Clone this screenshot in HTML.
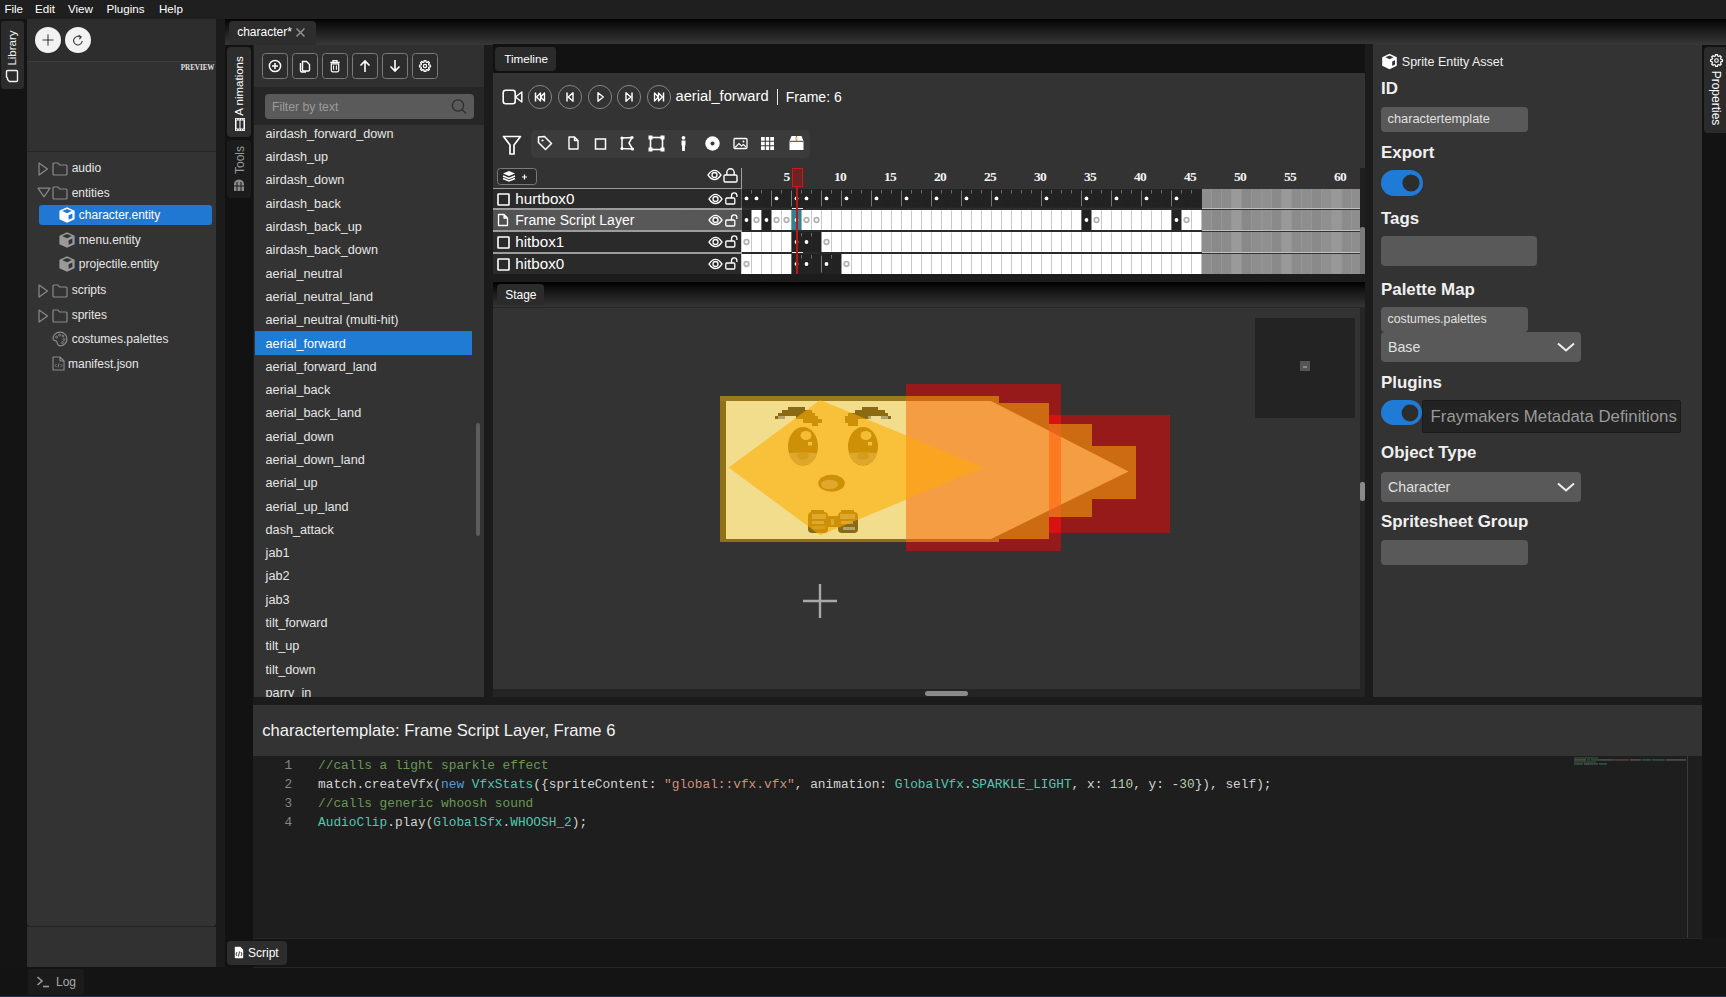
<!DOCTYPE html>
<html><head><meta charset="utf-8">
<style>
*{margin:0;padding:0;box-sizing:border-box}
html,body{width:1726px;height:997px;overflow:hidden;background:#131313;font-family:"Liberation Sans",sans-serif;color:#e8e8e8}
.a{position:absolute}
.t{position:absolute;white-space:nowrap;line-height:1}
svg{position:absolute;overflow:visible}
</style></head><body>
<div class="a" style="left:0px;top:0px;width:1726px;height:19px;background:#1f1f1f;"></div><div class="t" style="left:4.4px;top:2.68px;font-size:11.6px;color:#fff;font-family:'Liberation Sans',sans-serif;">File</div><div class="t" style="left:35px;top:2.68px;font-size:11.6px;color:#fff;font-family:'Liberation Sans',sans-serif;">Edit</div><div class="t" style="left:68px;top:2.68px;font-size:11.6px;color:#fff;font-family:'Liberation Sans',sans-serif;">View</div><div class="t" style="left:106.5px;top:2.68px;font-size:11.6px;color:#fff;font-family:'Liberation Sans',sans-serif;">Plugins</div><div class="t" style="left:159px;top:2.68px;font-size:11.6px;color:#fff;font-family:'Liberation Sans',sans-serif;">Help</div><div class="a" style="left:0px;top:19px;width:26px;height:948px;background:#141414;"></div><div class="a" style="left:1px;top:21px;width:23px;height:68px;background:#2b2b2b;border-radius:3px"></div><div class="t" style="left:12.5px;top:47.5px;font-size:11.5px;color:#f0f0f0;transform:translate(-50%,-50%) rotate(-90deg);transform-origin:center">Library</div><svg style="left:5px;top:69px" width="14" height="14" viewBox="0 0 14 14"><path d="M2.5 1.5 H11.5 a1 1 0 0 1 1 1 V11.5 a1 1 0 0 1 -1 1 H4.5 L2.5 10.5 V9 L1.5 8 V2.5 a1 1 0 0 1 1 -1z" fill="none" stroke="#f0f0f0" stroke-width="1.4" stroke-linejoin="round"/></svg><div class="a" style="left:27px;top:19px;width:189px;height:42px;background:#2d2d2d;"></div><div class="a" style="left:27px;top:61px;width:189px;height:1px;background:#3d3d3d;"></div><div class="a" style="left:27px;top:62px;width:189px;height:89px;background:#313131;"></div><div class="a" style="left:27px;top:151px;width:189px;height:1px;background:#262626;"></div><div class="a" style="left:27px;top:152px;width:189px;height:774px;background:#333333;border-radius:0 0 3px 3px"></div><div class="a" style="left:27px;top:926px;width:189px;height:1px;background:#222;"></div><div class="a" style="left:27px;top:927px;width:189px;height:40px;background:#313131;"></div><div class="a" style="left:216px;top:19px;width:9px;height:948px;background:#1b1b1b;"></div><svg style="left:35px;top:27px" width="26" height="26" viewBox="0 0 26 26"><circle cx="13" cy="13" r="13" fill="#f2f2f2"/><path d="M13 7.5v11M7.5 13h11" stroke="#3a3a3a" stroke-width="1.1"/></svg><svg style="left:65px;top:27px" width="26" height="26" viewBox="0 0 26 26"><circle cx="13" cy="13" r="13" fill="#f2f2f2"/><path d="M15.5 10.2 A4.3 4.3 0 1 0 17.2 14" fill="none" stroke="#3a3a3a" stroke-width="1.1"/><path d="M13.6 8.3 l2.6 1.6 -1.8 2.3" fill="none" stroke="#3a3a3a" stroke-width="1.1"/></svg><div class="t" style="left:180.8px;top:64.97px;font-size:7.2px;color:#e0e0e0;font-family:'Liberation Serif',serif;font-weight:bold;letter-spacing:-0.1px">PREVIEW</div><div class="a" style="left:39px;top:205px;width:173px;height:20px;background:#2178d2;border-radius:3px"></div><svg style="left:37.5px;top:161.9px" width="11" height="14" viewBox="0 0 11 14"><path d="M1 1 L9.5 7 L1 13 Z" fill="none" stroke="#8a8a8a" stroke-width="1.2" stroke-linejoin="round"/></svg><svg style="left:52px;top:161.9px" width="16" height="14" viewBox="0 0 16 14"><path d="M1 12 V2 a1 1 0 0 1 1 -1 h4 l1.5 2 h6.5 a1 1 0 0 1 1 1 v8 a1 1 0 0 1 -1 1 h-12 a1 1 0 0 1 -1 -1z" fill="none" stroke="#8a8a8a" stroke-width="1.2" stroke-linejoin="round"/></svg><div class="t" style="left:71.7px;top:162.44px;font-size:12px;color:#e6e6e6;font-family:'Liberation Sans',sans-serif;">audio</div><svg style="left:37px;top:187.3px" width="14" height="11" viewBox="0 0 14 11"><path d="M1 1.2 L13 1.2 L7 9.8 Z" fill="none" stroke="#8a8a8a" stroke-width="1.2" stroke-linejoin="round"/></svg><svg style="left:52px;top:186.3px" width="16" height="14" viewBox="0 0 16 14"><path d="M1 12 V2 a1 1 0 0 1 1 -1 h4 l1.5 2 h6.5 a1 1 0 0 1 1 1 v8 a1 1 0 0 1 -1 1 h-12 a1 1 0 0 1 -1 -1z" fill="none" stroke="#8a8a8a" stroke-width="1.2" stroke-linejoin="round"/></svg><div class="t" style="left:71.7px;top:186.84px;font-size:12px;color:#e6e6e6;font-family:'Liberation Sans',sans-serif;">entities</div><svg style="left:59px;top:207.4px" width="16" height="16" viewBox="0 0 16 16"><path d="M8 0.3 L15.6 3.8 V12.2 L8 15.7 L0.4 12.2 V3.8 Z" fill="#ffffff"/><path d="M3.2 4.1 L8 2 L12.8 4.1 L8 6.3 Z" fill="#2178d2"/><path d="M9.6 8.2 L13.4 6.4 V11 L9.6 12.8 Z" fill="#2178d2"/></svg><div class="t" style="left:78.8px;top:208.94px;font-size:12px;color:#ffffff;font-family:'Liberation Sans',sans-serif;">character.entity</div><svg style="left:59px;top:232.2px" width="16" height="16" viewBox="0 0 16 16"><path d="M8 0.3 L15.6 3.8 V12.2 L8 15.7 L0.4 12.2 V3.8 Z" fill="#9a9a9a"/><path d="M3.2 4.1 L8 2 L12.8 4.1 L8 6.3 Z" fill="#333"/><path d="M9.6 8.2 L13.4 6.4 V11 L9.6 12.8 Z" fill="#333"/></svg><div class="t" style="left:78.8px;top:233.74px;font-size:12px;color:#e6e6e6;font-family:'Liberation Sans',sans-serif;">menu.entity</div><svg style="left:59px;top:256.3px" width="16" height="16" viewBox="0 0 16 16"><path d="M8 0.3 L15.6 3.8 V12.2 L8 15.7 L0.4 12.2 V3.8 Z" fill="#9a9a9a"/><path d="M3.2 4.1 L8 2 L12.8 4.1 L8 6.3 Z" fill="#333"/><path d="M9.6 8.2 L13.4 6.4 V11 L9.6 12.8 Z" fill="#333"/></svg><div class="t" style="left:78.8px;top:257.84px;font-size:12px;color:#e6e6e6;font-family:'Liberation Sans',sans-serif;">projectile.entity</div><svg style="left:37.5px;top:283.6px" width="11" height="14" viewBox="0 0 11 14"><path d="M1 1 L9.5 7 L1 13 Z" fill="none" stroke="#8a8a8a" stroke-width="1.2" stroke-linejoin="round"/></svg><svg style="left:52px;top:283.6px" width="16" height="14" viewBox="0 0 16 14"><path d="M1 12 V2 a1 1 0 0 1 1 -1 h4 l1.5 2 h6.5 a1 1 0 0 1 1 1 v8 a1 1 0 0 1 -1 1 h-12 a1 1 0 0 1 -1 -1z" fill="none" stroke="#8a8a8a" stroke-width="1.2" stroke-linejoin="round"/></svg><div class="t" style="left:71.7px;top:284.14px;font-size:12px;color:#e6e6e6;font-family:'Liberation Sans',sans-serif;">scripts</div><svg style="left:37.5px;top:308.6px" width="11" height="14" viewBox="0 0 11 14"><path d="M1 1 L9.5 7 L1 13 Z" fill="none" stroke="#8a8a8a" stroke-width="1.2" stroke-linejoin="round"/></svg><svg style="left:52px;top:308.6px" width="16" height="14" viewBox="0 0 16 14"><path d="M1 12 V2 a1 1 0 0 1 1 -1 h4 l1.5 2 h6.5 a1 1 0 0 1 1 1 v8 a1 1 0 0 1 -1 1 h-12 a1 1 0 0 1 -1 -1z" fill="none" stroke="#8a8a8a" stroke-width="1.2" stroke-linejoin="round"/></svg><div class="t" style="left:71.7px;top:309.14px;font-size:12px;color:#e6e6e6;font-family:'Liberation Sans',sans-serif;">sprites</div><svg style="left:52px;top:331.2px" width="16" height="16" viewBox="0 0 16 16"><path d="M8 1.2 C3.8 1.2 1 4.2 1 7.6 C1 10.6 3.4 9 4.6 10.4 C5.8 11.8 4.6 14.8 8 14.8 C12 14.8 15 11.6 15 7.8 C15 4.2 12 1.2 8 1.2Z" fill="none" stroke="#8a8a8a" stroke-width="1.2"/><circle cx="4.6" cy="6" r="1" fill="none" stroke="#8a8a8a" stroke-width=".9"/><circle cx="7.6" cy="4" r="1" fill="none" stroke="#8a8a8a" stroke-width=".9"/><circle cx="11" cy="5" r="1" fill="none" stroke="#8a8a8a" stroke-width=".9"/><circle cx="12" cy="8.5" r="1" fill="none" stroke="#8a8a8a" stroke-width=".9"/><circle cx="10.4" cy="11.6" r="1" fill="none" stroke="#8a8a8a" stroke-width=".9"/></svg><div class="t" style="left:71.7px;top:333.24px;font-size:12px;color:#e6e6e6;font-family:'Liberation Sans',sans-serif;">costumes.palettes</div><svg style="left:52px;top:356.3px" width="13" height="15" viewBox="0 0 13 15"><path d="M1 1 H8 L12 5 V14 H1 Z M8 1 V5 H12" fill="none" stroke="#8a8a8a" stroke-width="1.1" stroke-linejoin="round"/><path d="M4.5 8 L3 9.5 L4.5 11 M8.5 8 L10 9.5 L8.5 11 M7 7.5 L6 11.5" fill="none" stroke="#8a8a8a" stroke-width=".9"/></svg><div class="t" style="left:68px;top:357.84px;font-size:12px;color:#e6e6e6;font-family:'Liberation Sans',sans-serif;">manifest.json</div><div class="a" style="left:26px;top:967px;width:1700px;height:29px;background:#141414;"></div><div class="a" style="left:0px;top:996px;width:1726px;height:1px;background:#1b3550;"></div><div class="a" style="left:28px;top:969px;width:56px;height:26px;background:#1b1b1b;border-radius:3px"></div><svg style="left:36px;top:975px" width="14" height="14" viewBox="0 0 14 14"><path d="M1.5 2 L6 6 L1.5 10" fill="none" stroke="#9a9a9a" stroke-width="1.6"/><path d="M7 11.5 H13" stroke="#9a9a9a" stroke-width="1.6"/></svg><div class="t" style="left:56px;top:975.84px;font-size:12px;color:#a8a8a8;font-family:'Liberation Sans',sans-serif;">Log</div><div class="a" style="left:225px;top:19px;width:1501px;height:26px;background:linear-gradient(#030303,#1c1c1c 45%,#383838);"></div><div class="a" style="left:229px;top:21px;width:87px;height:24px;background:#2d2d2d;border-radius:4px 4px 0 0"></div><div class="t" style="left:237.2px;top:25.64px;font-size:12px;color:#ffffff;font-family:'Liberation Sans',sans-serif;">character*</div><svg style="left:295px;top:27px" width="11" height="11" viewBox="0 0 11 11"><path d="M1.5 1.5 L9.5 9.5 M9.5 1.5 L1.5 9.5" stroke="#8f8f8f" stroke-width="1.6"/></svg><div class="a" style="left:225px;top:45px;width:28px;height:922px;background:#121212;"></div><div class="a" style="left:227px;top:47px;width:24px;height:90px;background:#2d2d2d;border-radius:4px"></div><div class="a" style="left:227px;top:140px;width:24px;height:58px;background:#1c1c1c;border-radius:4px"></div><div style="position:absolute;left:239.5px;top:85.5px;width:0;height:0"><div class="t" style="position:absolute;left:0;top:0;font-size:11.5px;color:#fff;transform:translate(-50%,-50%) rotate(-90deg)">A nimations</div></div><svg style="left:234.5px;top:118px" width="10" height="13" viewBox="0 0 10 13"><rect x="0" y="0" width="10" height="13" fill="#fff"/><rect x="1.5" y="2.5" width="3" height="8" fill="#2d2d2d"/><rect x="5.5" y="2.5" width="3" height="8" fill="#2d2d2d"/><path d="M1 1.2h1.2M3.5 1.2h1.2M6 1.2h1.2M8.4 1.2h1M1 11.8h1.2M3.5 11.8h1.2M6 11.8h1.2M8.4 11.8h1" stroke="#2d2d2d" stroke-width="0.9"/></svg><div style="position:absolute;left:239.5px;top:160px;width:0;height:0"><div class="t" style="position:absolute;left:0;top:0;font-size:12px;color:#9a9a9a;transform:translate(-50%,-50%) rotate(-90deg)">Tools</div></div><svg style="left:233px;top:178px" width="12" height="14" viewBox="0 0 12 14"><path d="M1 13 V6 Q1 2 6 1.5 Q11 2 11 6 V13 Z" fill="#8a8a8a"/><path d="M4 4v9M8 4v9M1 8h10" stroke="#1c1c1c" stroke-width="1"/></svg><div class="a" style="left:1702px;top:45px;width:24px;height:922px;background:#131313;"></div><div class="a" style="left:1704px;top:47px;width:22px;height:86px;background:#2b2b2b;border-radius:4px 0 0 4px"></div><div style="position:absolute;left:1715.5px;top:98px;width:0;height:0"><div class="t" style="position:absolute;left:0;top:0;font-size:12px;color:#fff;transform:translate(-50%,-50%) rotate(90deg)">Properties</div></div><svg style="left:1709.5px;top:54px" width="13" height="13" viewBox="0 0 13 13"><path d="M10.95 5.32 L12.42 5.51 L12.42 7.49 L10.95 7.68 L10.48 8.81 L11.38 9.99 L9.99 11.38 L8.81 10.48 L7.68 10.95 L7.49 12.42 L5.51 12.42 L5.32 10.95 L4.19 10.48 L3.01 11.38 L1.62 9.99 L2.52 8.81 L2.05 7.68 L0.58 7.49 L0.58 5.51 L2.05 5.32 L2.52 4.19 L1.62 3.01 L3.01 1.62 L4.19 2.52 L5.32 2.05 L5.51 0.58 L7.49 0.58 L7.68 2.05 L8.81 2.52 L9.99 1.62 L11.38 3.01 L10.48 4.19 Z" fill="none" stroke="#fff" stroke-width="1.2" stroke-linejoin="round"/><circle cx="6.5" cy="6.5" r="1.8" fill="none" stroke="#fff" stroke-width="1.1"/></svg><div class="a" style="left:253px;top:45px;width:1.5px;height:660px;background:#1b1b1b;"></div><div class="a" style="left:254px;top:45px;width:230px;height:42px;background:#303030;"></div><div class="a" style="left:254px;top:87px;width:230px;height:38px;background:#262626;"></div><div class="a" style="left:254px;top:125px;width:230px;height:572px;background:#333333;"></div><div class="a" style="left:484px;top:45px;width:9px;height:660px;background:#1b1b1b;"></div><div class="a" style="left:253px;top:697px;width:240px;height:8px;background:#1b1b1b;"></div><svg style="left:262px;top:53px" width="26" height="26" viewBox="0 0 26 26"><rect x="0.5" y="0.5" width="25" height="25" rx="3" fill="#2c2c2c" stroke="#7a7a7a"/><circle cx="13" cy="13" r="5.6" fill="none" stroke="#fff" stroke-width="1.5"/><path d="M13 10v6M10 13h6" stroke="#fff" stroke-width="1.5"/></svg><svg style="left:292px;top:53px" width="26" height="26" viewBox="0 0 26 26"><rect x="0.5" y="0.5" width="25" height="25" rx="3" fill="#2c2c2c" stroke="#7a7a7a"/><path d="M10.5 8.5 h4 l3 3 v5.5 a1 1 0 0 1 -1 1 h-5 a1 1 0 0 1 -1 -1z" fill="none" stroke="#fff" stroke-width="1.4"/><path d="M8.5 10 v7.5 a1.5 1.5 0 0 0 1.5 1.5 h4" fill="none" stroke="#fff" stroke-width="1.4"/></svg><svg style="left:322px;top:53px" width="26" height="26" viewBox="0 0 26 26"><rect x="0.5" y="0.5" width="25" height="25" rx="3" fill="#2c2c2c" stroke="#7a7a7a"/><path d="M9.3 10.8 h7.4 v6.8 a1.2 1.2 0 0 1 -1.2 1.2 h-5 a1.2 1.2 0 0 1 -1.2 -1.2z M8.3 9.3 h9.4 M11 9.3 v-1.6 h4 v1.6" fill="none" stroke="#fff" stroke-width="1.2"/><path d="M11.6 12.5v4.3M14.4 12.5v4.3" stroke="#fff" stroke-width="1"/></svg><svg style="left:352px;top:53px" width="26" height="26" viewBox="0 0 26 26"><rect x="0.5" y="0.5" width="25" height="25" rx="3" fill="#2c2c2c" stroke="#7a7a7a"/><path d="M13 19 V8 M8.5 12.5 L13 8 L17.5 12.5" fill="none" stroke="#fff" stroke-width="1.6"/></svg><svg style="left:382px;top:53px" width="26" height="26" viewBox="0 0 26 26"><rect x="0.5" y="0.5" width="25" height="25" rx="3" fill="#2c2c2c" stroke="#7a7a7a"/><path d="M13 7 V18 M8.5 13.5 L13 18 L17.5 13.5" fill="none" stroke="#fff" stroke-width="1.6"/></svg><svg style="left:412px;top:53px" width="26" height="26" viewBox="0 0 26 26"><rect x="0.5" y="0.5" width="25" height="25" rx="3" fill="#2c2c2c" stroke="#7a7a7a"/><path d="M16.96 11.95 L18.43 12.10 L18.43 13.90 L16.96 14.05 L16.55 15.06 L17.47 16.20 L16.20 17.47 L15.06 16.55 L14.05 16.96 L13.90 18.43 L12.10 18.43 L11.95 16.96 L10.94 16.55 L9.80 17.47 L8.53 16.20 L9.45 15.06 L9.04 14.05 L7.57 13.90 L7.57 12.10 L9.04 11.95 L9.45 10.94 L8.53 9.80 L9.80 8.53 L10.94 9.45 L11.95 9.04 L12.10 7.57 L13.90 7.57 L14.05 9.04 L15.06 9.45 L16.20 8.53 L17.47 9.80 L16.55 10.94 Z" fill="none" stroke="#fff" stroke-width="1.3" stroke-linejoin="round"/><circle cx="13" cy="13" r="1.6" fill="none" stroke="#fff" stroke-width="1.2"/></svg><div class="a" style="left:265px;top:94px;width:209px;height:25px;background:#5a5a5a;border-radius:4px"></div><div class="t" style="left:272px;top:100.67px;font-size:12.2px;color:#9b9b9b;font-family:'Liberation Sans',sans-serif;">Filter by text</div><svg style="left:450px;top:98px" width="18" height="18" viewBox="0 0 18 18"><circle cx="8" cy="7.5" r="5.6" fill="none" stroke="#2e2e2e" stroke-width="1.3"/><path d="M12 11.5 L16 15.5" stroke="#2e2e2e" stroke-width="1.3"/></svg><div class="a" style="left:253px;top:125px;width:231px;height:572px;overflow:hidden"><div class="a" style="left:2px;top:205.91px;width:217px;height:24px;background:#1f7bd4"></div><div class="t" style="left:12.6px;top:2.89px;font-size:12.65px;color:#e6e6e6;font-family:'Liberation Sans',sans-serif;">airdash_forward_down</div><div class="t" style="left:12.6px;top:26.18px;font-size:12.65px;color:#e6e6e6;font-family:'Liberation Sans',sans-serif;">airdash_up</div><div class="t" style="left:12.6px;top:49.47px;font-size:12.65px;color:#e6e6e6;font-family:'Liberation Sans',sans-serif;">airdash_down</div><div class="t" style="left:12.6px;top:72.76px;font-size:12.65px;color:#e6e6e6;font-family:'Liberation Sans',sans-serif;">airdash_back</div><div class="t" style="left:12.6px;top:96.05px;font-size:12.65px;color:#e6e6e6;font-family:'Liberation Sans',sans-serif;">airdash_back_up</div><div class="t" style="left:12.6px;top:119.34px;font-size:12.65px;color:#e6e6e6;font-family:'Liberation Sans',sans-serif;">airdash_back_down</div><div class="t" style="left:12.6px;top:142.63px;font-size:12.65px;color:#e6e6e6;font-family:'Liberation Sans',sans-serif;">aerial_neutral</div><div class="t" style="left:12.6px;top:165.92px;font-size:12.65px;color:#e6e6e6;font-family:'Liberation Sans',sans-serif;">aerial_neutral_land</div><div class="t" style="left:12.6px;top:189.21px;font-size:12.65px;color:#e6e6e6;font-family:'Liberation Sans',sans-serif;">aerial_neutral (multi-hit)</div><div class="t" style="left:12.6px;top:212.50px;font-size:12.65px;color:#ffffff;font-family:'Liberation Sans',sans-serif;">aerial_forward</div><div class="t" style="left:12.6px;top:235.79px;font-size:12.65px;color:#e6e6e6;font-family:'Liberation Sans',sans-serif;">aerial_forward_land</div><div class="t" style="left:12.6px;top:259.08px;font-size:12.65px;color:#e6e6e6;font-family:'Liberation Sans',sans-serif;">aerial_back</div><div class="t" style="left:12.6px;top:282.37px;font-size:12.65px;color:#e6e6e6;font-family:'Liberation Sans',sans-serif;">aerial_back_land</div><div class="t" style="left:12.6px;top:305.66px;font-size:12.65px;color:#e6e6e6;font-family:'Liberation Sans',sans-serif;">aerial_down</div><div class="t" style="left:12.6px;top:328.95px;font-size:12.65px;color:#e6e6e6;font-family:'Liberation Sans',sans-serif;">aerial_down_land</div><div class="t" style="left:12.6px;top:352.24px;font-size:12.65px;color:#e6e6e6;font-family:'Liberation Sans',sans-serif;">aerial_up</div><div class="t" style="left:12.6px;top:375.53px;font-size:12.65px;color:#e6e6e6;font-family:'Liberation Sans',sans-serif;">aerial_up_land</div><div class="t" style="left:12.6px;top:398.82px;font-size:12.65px;color:#e6e6e6;font-family:'Liberation Sans',sans-serif;">dash_attack</div><div class="t" style="left:12.6px;top:422.11px;font-size:12.65px;color:#e6e6e6;font-family:'Liberation Sans',sans-serif;">jab1</div><div class="t" style="left:12.6px;top:445.40px;font-size:12.65px;color:#e6e6e6;font-family:'Liberation Sans',sans-serif;">jab2</div><div class="t" style="left:12.6px;top:468.69px;font-size:12.65px;color:#e6e6e6;font-family:'Liberation Sans',sans-serif;">jab3</div><div class="t" style="left:12.6px;top:491.98px;font-size:12.65px;color:#e6e6e6;font-family:'Liberation Sans',sans-serif;">tilt_forward</div><div class="t" style="left:12.6px;top:515.27px;font-size:12.65px;color:#e6e6e6;font-family:'Liberation Sans',sans-serif;">tilt_up</div><div class="t" style="left:12.6px;top:538.56px;font-size:12.65px;color:#e6e6e6;font-family:'Liberation Sans',sans-serif;">tilt_down</div><div class="t" style="left:12.6px;top:561.85px;font-size:12.65px;color:#e6e6e6;font-family:'Liberation Sans',sans-serif;">parry_in</div></div><div class="a" style="left:476px;top:423px;width:4px;height:113px;background:#5c5c5c;border-radius:2px"></div><div class="a" style="left:493px;top:44px;width:872px;height:29px;background:#121212;"></div><div class="a" style="left:495px;top:47px;width:61px;height:24px;background:#2b2b2b;border-radius:4px"></div><div class="t" style="left:504.2px;top:52.90px;font-size:11.7px;color:#ffffff;font-family:'Liberation Sans',sans-serif;">Timeline</div><div class="a" style="left:493px;top:73px;width:872px;height:201px;background:#333333;"></div><div class="a" style="left:493px;top:274px;width:872px;height:8px;background:#1c1c1c;"></div><div class="a" style="left:1365px;top:44px;width:8px;height:661px;background:#1b1b1b;"></div><svg style="left:502px;top:89px" width="21" height="16" viewBox="0 0 21 16"><rect x="1.2" y="1.2" width="12" height="13.5" rx="2.5" fill="none" stroke="#fff" stroke-width="1.6"/><path d="M13.5 8 L19.8 3 V13 Z" fill="none" stroke="#fff" stroke-width="1.5" stroke-linejoin="round"/></svg><svg style="left:528.4px;top:85px" width="24" height="24" viewBox="0 0 24 24"><circle cx="12" cy="12" r="11.6" fill="none" stroke="#8c8c8c" stroke-width="0.9"/><path d="M7.5 7.5v9" stroke="#fff" stroke-width="1.5"/><path d="M12.5 8 L8.6 12 L12.5 16 Z M16.5 8 L12.6 12 L16.5 16 Z" fill="none" stroke="#fff" stroke-width="1.3" stroke-linejoin="round"/></svg><svg style="left:557.9px;top:85px" width="24" height="24" viewBox="0 0 24 24"><circle cx="12" cy="12" r="11.6" fill="none" stroke="#8c8c8c" stroke-width="0.9"/><path d="M9 7.5v9" stroke="#fff" stroke-width="1.5"/><path d="M15 7.8 L10.2 12 L15 16.2 Z" fill="none" stroke="#fff" stroke-width="1.4" stroke-linejoin="round"/></svg><svg style="left:588.0px;top:85px" width="24" height="24" viewBox="0 0 24 24"><circle cx="12" cy="12" r="11.6" fill="none" stroke="#8c8c8c" stroke-width="0.9"/><path d="M10 7.8 L15.3 12 L10 16.2 Z" fill="none" stroke="#fff" stroke-width="1.4" stroke-linejoin="round"/></svg><svg style="left:617.0px;top:85px" width="24" height="24" viewBox="0 0 24 24"><circle cx="12" cy="12" r="11.6" fill="none" stroke="#8c8c8c" stroke-width="0.9"/><path d="M15 7.5v9" stroke="#fff" stroke-width="1.5"/><path d="M9 7.8 L13.8 12 L9 16.2 Z" fill="none" stroke="#fff" stroke-width="1.4" stroke-linejoin="round"/></svg><svg style="left:646.9px;top:85px" width="24" height="24" viewBox="0 0 24 24"><circle cx="12" cy="12" r="11.6" fill="none" stroke="#8c8c8c" stroke-width="0.9"/><path d="M16.5 7.5v9" stroke="#fff" stroke-width="1.5"/><path d="M7.5 8 L11.4 12 L7.5 16 Z M11.5 8 L15.4 12 L11.5 16 Z" fill="none" stroke="#fff" stroke-width="1.3" stroke-linejoin="round"/></svg><div class="t" style="left:675.5px;top:89.16px;font-size:14.7px;color:#ffffff;font-family:'Liberation Sans',sans-serif;">aerial_forward</div><div class="a" style="left:776.5px;top:89px;width:1.4px;height:16px;background:#e8e8e8;"></div><div class="t" style="left:785.7px;top:89.75px;font-size:14px;color:#ffffff;font-family:'Liberation Sans',sans-serif;">Frame: 6</div><svg style="left:502px;top:135px" width="20" height="21" viewBox="0 0 20 21"><path d="M1.5 1.5 H18.5 L12 10 V19 H8 V10 Z" fill="none" stroke="#fff" stroke-width="1.7" stroke-linejoin="round"/></svg><div class="a" style="left:531px;top:130px;width:279px;height:27.5px;background:#3b3b3b;border-radius:5px"></div><svg style="left:536.5px;top:135px" width="17" height="17" viewBox="0 0 17 17"><path d="M2 2.5 V8 L9 15 L15 9 L8 2 Z" fill="none" stroke="#fff" stroke-width="1.5" stroke-linejoin="round" transform="translate(-0.5,-0.5)"/><circle cx="5.5" cy="5.5" r="1.1" fill="#fff"/></svg><svg style="left:564.5px;top:135px" width="17" height="17" viewBox="0 0 17 17"><path d="M4 2 H9.5 L13 5.5 V14 H4 Z M9.5 2 V5.5 H13" fill="none" stroke="#fff" stroke-width="1.4" stroke-linejoin="round"/></svg><svg style="left:592.2px;top:135px" width="17" height="17" viewBox="0 0 17 17"><rect x="3.5" y="4" width="10" height="10" fill="none" stroke="#fff" stroke-width="1.5"/></svg><svg style="left:619.2px;top:135px" width="17" height="17" viewBox="0 0 17 17"><path d="M3 3 L13 2.5 L10 8 L13.5 14 L3 13.5 Z" fill="none" stroke="#fff" stroke-width="1.5"/><circle cx="3" cy="3" r="1.6" fill="#fff"/><circle cx="13" cy="2.5" r="1.6" fill="#fff"/><circle cx="13.5" cy="14" r="1.6" fill="#fff"/><circle cx="3" cy="13.5" r="1.6" fill="#fff"/></svg><svg style="left:647.5px;top:135px" width="17" height="17" viewBox="0 0 17 17"><rect x="2.5" y="2.5" width="12" height="12" fill="none" stroke="#fff" stroke-width="1.6"/><rect x="0.5" y="0.5" width="4" height="4" fill="#fff"/><rect x="12.5" y="0.5" width="4" height="4" fill="#fff"/><rect x="0.5" y="12.5" width="4" height="4" fill="#fff"/><rect x="12.5" y="12.5" width="4" height="4" fill="#fff"/></svg><svg style="left:675.4px;top:135px" width="17" height="17" viewBox="0 0 17 17"><circle cx="8.5" cy="2.8" r="1.9" fill="#fff"/><path d="M6.5 5.5 h4 v5 h-0.6 v5.5 h-2.8 v-5.5 h-0.6z" fill="#fff"/></svg><svg style="left:703.5px;top:135px" width="17" height="17" viewBox="0 0 17 17"><circle cx="8.5" cy="8.5" r="7.2" fill="#fff"/><circle cx="8.5" cy="8.5" r="2" fill="#3b3b3b"/></svg><svg style="left:731.5px;top:135px" width="17" height="17" viewBox="0 0 17 17"><rect x="2" y="3.5" width="13" height="10" rx="1" fill="none" stroke="#fff" stroke-width="1.3"/><path d="M3 12.5 L7 8.5 L9.5 11 L11.5 9.5 L14 12" fill="none" stroke="#fff" stroke-width="1.1"/><circle cx="11.5" cy="6.5" r="1" fill="#fff"/></svg><svg style="left:759.2px;top:135px" width="17" height="17" viewBox="0 0 17 17"><path d="M2 2h13v13H2z" fill="#fff"/><path d="M6.3 2v13M10.7 2v13M2 6.3h13M2 10.7h13" stroke="#3b3b3b" stroke-width="1.1"/></svg><svg style="left:787.5px;top:135px" width="17" height="17" viewBox="0 0 17 17"><path d="M1.5 6 L3.5 1 H13.5 L15.5 6 V15 H1.5 Z" fill="#fff"/><path d="M1.5 6.3 H15.5 M8.5 1 V6" stroke="#3b3b3b" stroke-width="1"/><rect x="7.3" y="1.5" width="2.2" height="4.2" fill="#e0c070"/></svg><svg style="left:497px;top:168px" width="40" height="17" viewBox="0 0 40 17"><rect x="0.5" y="0.5" width="39" height="16" rx="3" fill="#2b2b2b" stroke="#7a7a7a"/><path d="M12 3 L18 5.5 L12 8 L6 5.5Z" fill="#fff"/><path d="M6 8 L12 10.5 L18 8 M6 10.5 L12 13 L18 10.5" fill="none" stroke="#fff" stroke-width="1.5"/><path d="M25 9h5M27.5 6.5v5" stroke="#fff" stroke-width="1.2"/></svg><svg style="left:706.5px;top:169px" width="15" height="12" viewBox="0 0 15 12"><path d="M1 6 Q7.5 -3.2 14 6 Q7.5 15.2 1 6Z" fill="none" stroke="#fff" stroke-width="1.3" stroke-linejoin="round"/><circle cx="7.5" cy="6" r="2.5" fill="none" stroke="#fff" stroke-width="1.3"/><circle cx="7.5" cy="6" r="0.9" fill="#222"/></svg><svg style="left:723px;top:167.5px" width="15" height="15" viewBox="0 0 15 15"><rect x="1" y="7" width="13" height="7" rx="1.2" fill="none" stroke="#fff" stroke-width="1.4"/><path d="M3.8 7 V4.5 a3.7 3.7 0 0 1 7.4 0 V7" fill="none" stroke="#fff" stroke-width="1.4"/></svg><div class="a" style="left:741px;top:168px;width:1px;height:106px;background:#a0a0a0;"></div><div class="a" style="left:493px;top:188px;width:248px;height:1.5px;background:#9c9c9c;"></div><div class="a" style="left:493px;top:189px;width:248px;height:19px;background:#2a2a2a;"></div><svg style="left:497px;top:193.1px" width="13" height="13" viewBox="0 0 13 13"><rect x="1" y="1" width="11" height="11" rx="0.5" fill="none" stroke="#fff" stroke-width="1.6"/></svg><div class="t" style="left:515.3px;top:190.83px;font-size:15.2px;color:#ffffff;font-family:'Liberation Sans',sans-serif;">hurtbox0</div><svg style="left:708px;top:192.9px" width="15" height="12" viewBox="0 0 15 12"><path d="M1 6 Q7.5 -3.2 14 6 Q7.5 15.2 1 6Z" fill="none" stroke="#fff" stroke-width="1.3" stroke-linejoin="round"/><circle cx="7.5" cy="6" r="2.5" fill="none" stroke="#fff" stroke-width="1.3"/><circle cx="7.5" cy="6" r="0.9" fill="#222"/></svg><svg style="left:724.5px;top:192.4px" width="13" height="13" viewBox="0 0 13 13"><rect x="0.8" y="6" width="9" height="6" rx="1" fill="none" stroke="#fff" stroke-width="1.3"/><path d="M6.5 6 V3.6 a2.7 2.7 0 0 1 5.4 0 V5" fill="none" stroke="#fff" stroke-width="1.3"/></svg><div class="a" style="left:493px;top:209.5px;width:248px;height:20.5px;background:linear-gradient(90deg,#505050,#5a5a5a 40%,#555 100%);"></div><svg style="left:497px;top:212.8px" width="12" height="14" viewBox="0 0 12 14"><path d="M1.5 1.5 H7 L10.5 5 V12.5 H1.5 Z M7 1.5 V5 H10.5" fill="none" stroke="#fff" stroke-width="1.3" stroke-linejoin="round"/></svg><div class="t" style="left:515.3px;top:212.95px;font-size:14.0px;color:#ffffff;font-family:'Liberation Sans',sans-serif;">Frame Script Layer</div><svg style="left:708px;top:214.0px" width="15" height="12" viewBox="0 0 15 12"><path d="M1 6 Q7.5 -3.2 14 6 Q7.5 15.2 1 6Z" fill="none" stroke="#fff" stroke-width="1.3" stroke-linejoin="round"/><circle cx="7.5" cy="6" r="2.5" fill="none" stroke="#fff" stroke-width="1.3"/><circle cx="7.5" cy="6" r="0.9" fill="#222"/></svg><svg style="left:724.5px;top:213.5px" width="13" height="13" viewBox="0 0 13 13"><rect x="0.8" y="6" width="9" height="6" rx="1" fill="none" stroke="#fff" stroke-width="1.3"/><path d="M6.5 6 V3.6 a2.7 2.7 0 0 1 5.4 0 V5" fill="none" stroke="#fff" stroke-width="1.3"/></svg><div class="a" style="left:493px;top:232px;width:248px;height:20px;background:#2a2a2a;"></div><svg style="left:497px;top:236.0px" width="13" height="13" viewBox="0 0 13 13"><rect x="1" y="1" width="11" height="11" rx="0.5" fill="none" stroke="#fff" stroke-width="1.6"/></svg><div class="t" style="left:515.3px;top:233.73px;font-size:15.2px;color:#ffffff;font-family:'Liberation Sans',sans-serif;">hitbox1</div><svg style="left:708px;top:235.8px" width="15" height="12" viewBox="0 0 15 12"><path d="M1 6 Q7.5 -3.2 14 6 Q7.5 15.2 1 6Z" fill="none" stroke="#fff" stroke-width="1.3" stroke-linejoin="round"/><circle cx="7.5" cy="6" r="2.5" fill="none" stroke="#fff" stroke-width="1.3"/><circle cx="7.5" cy="6" r="0.9" fill="#222"/></svg><svg style="left:724.5px;top:235.3px" width="13" height="13" viewBox="0 0 13 13"><rect x="0.8" y="6" width="9" height="6" rx="1" fill="none" stroke="#fff" stroke-width="1.3"/><path d="M6.5 6 V3.6 a2.7 2.7 0 0 1 5.4 0 V5" fill="none" stroke="#fff" stroke-width="1.3"/></svg><div class="a" style="left:493px;top:254px;width:248px;height:20px;background:#2a2a2a;"></div><svg style="left:497px;top:257.8px" width="13" height="13" viewBox="0 0 13 13"><rect x="1" y="1" width="11" height="11" rx="0.5" fill="none" stroke="#fff" stroke-width="1.6"/></svg><div class="t" style="left:515.3px;top:255.53px;font-size:15.2px;color:#ffffff;font-family:'Liberation Sans',sans-serif;">hitbox0</div><svg style="left:708px;top:257.6px" width="15" height="12" viewBox="0 0 15 12"><path d="M1 6 Q7.5 -3.2 14 6 Q7.5 15.2 1 6Z" fill="none" stroke="#fff" stroke-width="1.3" stroke-linejoin="round"/><circle cx="7.5" cy="6" r="2.5" fill="none" stroke="#fff" stroke-width="1.3"/><circle cx="7.5" cy="6" r="0.9" fill="#222"/></svg><svg style="left:724.5px;top:257.1px" width="13" height="13" viewBox="0 0 13 13"><rect x="0.8" y="6" width="9" height="6" rx="1" fill="none" stroke="#fff" stroke-width="1.3"/><path d="M6.5 6 V3.6 a2.7 2.7 0 0 1 5.4 0 V5" fill="none" stroke="#fff" stroke-width="1.3"/></svg><div class="a" style="left:493px;top:208.4px;width:248px;height:1.2px;background:#9c9c9c;"></div><div class="a" style="left:493px;top:230.4px;width:248px;height:1.2px;background:#9c9c9c;"></div><div class="a" style="left:493px;top:252.4px;width:248px;height:1.2px;background:#9c9c9c;"></div><svg style="left:0;top:0" width="1726" height="997"><rect x="741.5" y="189" width="10.2" height="18.80000000000001" fill="#222222"/><rect x="751.5" y="189" width="10.2" height="18.80000000000001" fill="#222222"/><rect x="761.5" y="189" width="10.2" height="18.80000000000001" fill="#222222"/><rect x="771.5" y="189" width="10.2" height="18.80000000000001" fill="#222222"/><rect x="781.5" y="189" width="10.2" height="18.80000000000001" fill="#222222"/><rect x="791.5" y="189" width="10.2" height="18.80000000000001" fill="#222222"/><rect x="801.5" y="189" width="10.2" height="18.80000000000001" fill="#222222"/><rect x="811.5" y="189" width="10.2" height="18.80000000000001" fill="#222222"/><rect x="821.5" y="189" width="10.2" height="18.80000000000001" fill="#222222"/><rect x="831.5" y="189" width="10.2" height="18.80000000000001" fill="#222222"/><rect x="841.5" y="189" width="10.2" height="18.80000000000001" fill="#222222"/><rect x="851.5" y="189" width="10.2" height="18.80000000000001" fill="#222222"/><rect x="861.5" y="189" width="10.2" height="18.80000000000001" fill="#222222"/><rect x="871.5" y="189" width="10.2" height="18.80000000000001" fill="#222222"/><rect x="881.5" y="189" width="10.2" height="18.80000000000001" fill="#222222"/><rect x="891.5" y="189" width="10.2" height="18.80000000000001" fill="#222222"/><rect x="901.5" y="189" width="10.2" height="18.80000000000001" fill="#222222"/><rect x="911.5" y="189" width="10.2" height="18.80000000000001" fill="#222222"/><rect x="921.5" y="189" width="10.2" height="18.80000000000001" fill="#222222"/><rect x="931.5" y="189" width="10.2" height="18.80000000000001" fill="#222222"/><rect x="941.5" y="189" width="10.2" height="18.80000000000001" fill="#222222"/><rect x="951.5" y="189" width="10.2" height="18.80000000000001" fill="#222222"/><rect x="961.5" y="189" width="10.2" height="18.80000000000001" fill="#222222"/><rect x="971.5" y="189" width="10.2" height="18.80000000000001" fill="#222222"/><rect x="981.5" y="189" width="10.2" height="18.80000000000001" fill="#222222"/><rect x="991.5" y="189" width="10.2" height="18.80000000000001" fill="#222222"/><rect x="1001.5" y="189" width="10.2" height="18.80000000000001" fill="#222222"/><rect x="1011.5" y="189" width="10.2" height="18.80000000000001" fill="#222222"/><rect x="1021.5" y="189" width="10.2" height="18.80000000000001" fill="#222222"/><rect x="1031.5" y="189" width="10.2" height="18.80000000000001" fill="#222222"/><rect x="1041.5" y="189" width="10.2" height="18.80000000000001" fill="#222222"/><rect x="1051.5" y="189" width="10.2" height="18.80000000000001" fill="#222222"/><rect x="1061.5" y="189" width="10.2" height="18.80000000000001" fill="#222222"/><rect x="1071.5" y="189" width="10.2" height="18.80000000000001" fill="#222222"/><rect x="1081.5" y="189" width="10.2" height="18.80000000000001" fill="#222222"/><rect x="1091.5" y="189" width="10.2" height="18.80000000000001" fill="#222222"/><rect x="1101.5" y="189" width="10.2" height="18.80000000000001" fill="#222222"/><rect x="1111.5" y="189" width="10.2" height="18.80000000000001" fill="#222222"/><rect x="1121.5" y="189" width="10.2" height="18.80000000000001" fill="#222222"/><rect x="1131.5" y="189" width="10.2" height="18.80000000000001" fill="#222222"/><rect x="1141.5" y="189" width="10.2" height="18.80000000000001" fill="#222222"/><rect x="1151.5" y="189" width="10.2" height="18.80000000000001" fill="#222222"/><rect x="1161.5" y="189" width="10.2" height="18.80000000000001" fill="#222222"/><rect x="1171.5" y="189" width="10.2" height="18.80000000000001" fill="#222222"/><rect x="1181.5" y="189" width="10.2" height="18.80000000000001" fill="#222222"/><rect x="1191.5" y="189" width="10.2" height="18.80000000000001" fill="#222222"/><rect x="751.0" y="190" width="1" height="3.5" fill="#6a6a6a"/><rect x="761.0" y="190" width="1" height="3.5" fill="#6a6a6a"/><rect x="771.0" y="190.5" width="1" height="15.800000000000011" fill="#777"/><rect x="781.0" y="190" width="1" height="3.5" fill="#6a6a6a"/><rect x="791.0" y="190.5" width="1" height="15.800000000000011" fill="#777"/><rect x="801.0" y="190" width="1" height="3.5" fill="#6a6a6a"/><rect x="811.0" y="190" width="1" height="3.5" fill="#6a6a6a"/><rect x="821.0" y="190.5" width="1" height="15.800000000000011" fill="#777"/><rect x="831.0" y="190" width="1" height="3.5" fill="#6a6a6a"/><rect x="841.0" y="190.5" width="1" height="15.800000000000011" fill="#777"/><rect x="851.0" y="190" width="1" height="3.5" fill="#6a6a6a"/><rect x="861.0" y="190" width="1" height="3.5" fill="#6a6a6a"/><rect x="871.0" y="190.5" width="1" height="15.800000000000011" fill="#777"/><rect x="881.0" y="190" width="1" height="3.5" fill="#6a6a6a"/><rect x="891.0" y="190" width="1" height="3.5" fill="#6a6a6a"/><rect x="901.0" y="190.5" width="1" height="15.800000000000011" fill="#777"/><rect x="911.0" y="190" width="1" height="3.5" fill="#6a6a6a"/><rect x="921.0" y="190" width="1" height="3.5" fill="#6a6a6a"/><rect x="931.0" y="190.5" width="1" height="15.800000000000011" fill="#777"/><rect x="941.0" y="190" width="1" height="3.5" fill="#6a6a6a"/><rect x="951.0" y="190" width="1" height="3.5" fill="#6a6a6a"/><rect x="961.0" y="190.5" width="1" height="15.800000000000011" fill="#777"/><rect x="971.0" y="190" width="1" height="3.5" fill="#6a6a6a"/><rect x="981.0" y="190" width="1" height="3.5" fill="#6a6a6a"/><rect x="991.0" y="190.5" width="1" height="15.800000000000011" fill="#777"/><rect x="1001.0" y="190" width="1" height="3.5" fill="#6a6a6a"/><rect x="1011.0" y="190" width="1" height="3.5" fill="#6a6a6a"/><rect x="1021.0" y="190" width="1" height="3.5" fill="#6a6a6a"/><rect x="1031.0" y="190" width="1" height="3.5" fill="#6a6a6a"/><rect x="1041.0" y="190.5" width="1" height="15.800000000000011" fill="#777"/><rect x="1051.0" y="190" width="1" height="3.5" fill="#6a6a6a"/><rect x="1061.0" y="190" width="1" height="3.5" fill="#6a6a6a"/><rect x="1071.0" y="190" width="1" height="3.5" fill="#6a6a6a"/><rect x="1081.0" y="190.5" width="1" height="15.800000000000011" fill="#777"/><rect x="1091.0" y="190" width="1" height="3.5" fill="#6a6a6a"/><rect x="1101.0" y="190" width="1" height="3.5" fill="#6a6a6a"/><rect x="1111.0" y="190.5" width="1" height="15.800000000000011" fill="#777"/><rect x="1121.0" y="190" width="1" height="3.5" fill="#6a6a6a"/><rect x="1131.0" y="190" width="1" height="3.5" fill="#6a6a6a"/><rect x="1141.0" y="190.5" width="1" height="15.800000000000011" fill="#777"/><rect x="1151.0" y="190" width="1" height="3.5" fill="#6a6a6a"/><rect x="1161.0" y="190" width="1" height="3.5" fill="#6a6a6a"/><rect x="1171.0" y="190.5" width="1" height="15.800000000000011" fill="#777"/><rect x="1181.0" y="190" width="1" height="3.5" fill="#6a6a6a"/><rect x="1191.0" y="190" width="1" height="3.5" fill="#6a6a6a"/><circle cx="746.5" cy="198.4" r="1.9" fill="#fff"/><circle cx="756.5" cy="198.4" r="1.9" fill="#fff"/><circle cx="776.5" cy="198.4" r="1.9" fill="#fff"/><circle cx="796.5" cy="198.4" r="1.9" fill="#fff"/><circle cx="806.5" cy="198.4" r="1.9" fill="#fff"/><circle cx="826.5" cy="198.4" r="1.9" fill="#fff"/><circle cx="846.5" cy="198.4" r="1.9" fill="#fff"/><circle cx="876.5" cy="198.4" r="1.9" fill="#fff"/><circle cx="906.5" cy="198.4" r="1.9" fill="#fff"/><circle cx="936.5" cy="198.4" r="1.9" fill="#fff"/><circle cx="966.5" cy="198.4" r="1.9" fill="#fff"/><circle cx="996.5" cy="198.4" r="1.9" fill="#fff"/><circle cx="1046.5" cy="198.4" r="1.9" fill="#fff"/><circle cx="1086.5" cy="198.4" r="1.9" fill="#fff"/><circle cx="1116.5" cy="198.4" r="1.9" fill="#fff"/><circle cx="1146.5" cy="198.4" r="1.9" fill="#fff"/><circle cx="1176.5" cy="198.4" r="1.9" fill="#fff"/><rect x="741.5" y="209.8" width="10.2" height="20.399999999999977" fill="#222222"/><rect x="751.5" y="209.8" width="10.2" height="20.399999999999977" fill="#ffffff"/><rect x="761.5" y="209.8" width="10.2" height="20.399999999999977" fill="#222222"/><rect x="771.5" y="209.8" width="10.2" height="20.399999999999977" fill="#ffffff"/><rect x="781.5" y="209.8" width="10.2" height="20.399999999999977" fill="#ffffff"/><rect x="791.5" y="209.8" width="10.2" height="20.399999999999977" fill="#2f8394"/><rect x="801.5" y="209.8" width="10.2" height="20.399999999999977" fill="#ffffff"/><rect x="811.5" y="209.8" width="10.2" height="20.399999999999977" fill="#ffffff"/><rect x="821.5" y="209.8" width="10.2" height="20.399999999999977" fill="#ffffff"/><rect x="831.5" y="209.8" width="10.2" height="20.399999999999977" fill="#ffffff"/><rect x="841.5" y="209.8" width="10.2" height="20.399999999999977" fill="#ffffff"/><rect x="851.5" y="209.8" width="10.2" height="20.399999999999977" fill="#ffffff"/><rect x="861.5" y="209.8" width="10.2" height="20.399999999999977" fill="#ffffff"/><rect x="871.5" y="209.8" width="10.2" height="20.399999999999977" fill="#ffffff"/><rect x="881.5" y="209.8" width="10.2" height="20.399999999999977" fill="#ffffff"/><rect x="891.5" y="209.8" width="10.2" height="20.399999999999977" fill="#ffffff"/><rect x="901.5" y="209.8" width="10.2" height="20.399999999999977" fill="#ffffff"/><rect x="911.5" y="209.8" width="10.2" height="20.399999999999977" fill="#ffffff"/><rect x="921.5" y="209.8" width="10.2" height="20.399999999999977" fill="#ffffff"/><rect x="931.5" y="209.8" width="10.2" height="20.399999999999977" fill="#ffffff"/><rect x="941.5" y="209.8" width="10.2" height="20.399999999999977" fill="#ffffff"/><rect x="951.5" y="209.8" width="10.2" height="20.399999999999977" fill="#ffffff"/><rect x="961.5" y="209.8" width="10.2" height="20.399999999999977" fill="#ffffff"/><rect x="971.5" y="209.8" width="10.2" height="20.399999999999977" fill="#ffffff"/><rect x="981.5" y="209.8" width="10.2" height="20.399999999999977" fill="#ffffff"/><rect x="991.5" y="209.8" width="10.2" height="20.399999999999977" fill="#ffffff"/><rect x="1001.5" y="209.8" width="10.2" height="20.399999999999977" fill="#ffffff"/><rect x="1011.5" y="209.8" width="10.2" height="20.399999999999977" fill="#ffffff"/><rect x="1021.5" y="209.8" width="10.2" height="20.399999999999977" fill="#ffffff"/><rect x="1031.5" y="209.8" width="10.2" height="20.399999999999977" fill="#ffffff"/><rect x="1041.5" y="209.8" width="10.2" height="20.399999999999977" fill="#ffffff"/><rect x="1051.5" y="209.8" width="10.2" height="20.399999999999977" fill="#ffffff"/><rect x="1061.5" y="209.8" width="10.2" height="20.399999999999977" fill="#ffffff"/><rect x="1071.5" y="209.8" width="10.2" height="20.399999999999977" fill="#ffffff"/><rect x="1081.5" y="209.8" width="10.2" height="20.399999999999977" fill="#222222"/><rect x="1091.5" y="209.8" width="10.2" height="20.399999999999977" fill="#ffffff"/><rect x="1101.5" y="209.8" width="10.2" height="20.399999999999977" fill="#ffffff"/><rect x="1111.5" y="209.8" width="10.2" height="20.399999999999977" fill="#ffffff"/><rect x="1121.5" y="209.8" width="10.2" height="20.399999999999977" fill="#ffffff"/><rect x="1131.5" y="209.8" width="10.2" height="20.399999999999977" fill="#ffffff"/><rect x="1141.5" y="209.8" width="10.2" height="20.399999999999977" fill="#ffffff"/><rect x="1151.5" y="209.8" width="10.2" height="20.399999999999977" fill="#ffffff"/><rect x="1161.5" y="209.8" width="10.2" height="20.399999999999977" fill="#ffffff"/><rect x="1171.5" y="209.8" width="10.2" height="20.399999999999977" fill="#222222"/><rect x="1181.5" y="209.8" width="10.2" height="20.399999999999977" fill="#ffffff"/><rect x="1191.5" y="209.8" width="10.2" height="20.399999999999977" fill="#ffffff"/><rect x="781.0" y="210.8" width="1" height="18.399999999999977" fill="#c8c8c8"/><rect x="811.0" y="210.8" width="1" height="18.399999999999977" fill="#c8c8c8"/><rect x="821.0" y="210.8" width="1" height="18.399999999999977" fill="#c8c8c8"/><rect x="831.0" y="210.8" width="1" height="18.399999999999977" fill="#c8c8c8"/><rect x="841.0" y="210.8" width="1" height="18.399999999999977" fill="#c8c8c8"/><rect x="851.0" y="210.8" width="1" height="18.399999999999977" fill="#c8c8c8"/><rect x="861.0" y="210.8" width="1" height="18.399999999999977" fill="#c8c8c8"/><rect x="871.0" y="210.8" width="1" height="18.399999999999977" fill="#c8c8c8"/><rect x="881.0" y="210.8" width="1" height="18.399999999999977" fill="#c8c8c8"/><rect x="891.0" y="210.8" width="1" height="18.399999999999977" fill="#c8c8c8"/><rect x="901.0" y="210.8" width="1" height="18.399999999999977" fill="#c8c8c8"/><rect x="911.0" y="210.8" width="1" height="18.399999999999977" fill="#c8c8c8"/><rect x="921.0" y="210.8" width="1" height="18.399999999999977" fill="#c8c8c8"/><rect x="931.0" y="210.8" width="1" height="18.399999999999977" fill="#c8c8c8"/><rect x="941.0" y="210.8" width="1" height="18.399999999999977" fill="#c8c8c8"/><rect x="951.0" y="210.8" width="1" height="18.399999999999977" fill="#c8c8c8"/><rect x="961.0" y="210.8" width="1" height="18.399999999999977" fill="#c8c8c8"/><rect x="971.0" y="210.8" width="1" height="18.399999999999977" fill="#c8c8c8"/><rect x="981.0" y="210.8" width="1" height="18.399999999999977" fill="#c8c8c8"/><rect x="991.0" y="210.8" width="1" height="18.399999999999977" fill="#c8c8c8"/><rect x="1001.0" y="210.8" width="1" height="18.399999999999977" fill="#c8c8c8"/><rect x="1011.0" y="210.8" width="1" height="18.399999999999977" fill="#c8c8c8"/><rect x="1021.0" y="210.8" width="1" height="18.399999999999977" fill="#c8c8c8"/><rect x="1031.0" y="210.8" width="1" height="18.399999999999977" fill="#c8c8c8"/><rect x="1041.0" y="210.8" width="1" height="18.399999999999977" fill="#c8c8c8"/><rect x="1051.0" y="210.8" width="1" height="18.399999999999977" fill="#c8c8c8"/><rect x="1061.0" y="210.8" width="1" height="18.399999999999977" fill="#c8c8c8"/><rect x="1071.0" y="210.8" width="1" height="18.399999999999977" fill="#c8c8c8"/><rect x="1101.0" y="210.8" width="1" height="18.399999999999977" fill="#c8c8c8"/><rect x="1111.0" y="210.8" width="1" height="18.399999999999977" fill="#c8c8c8"/><rect x="1121.0" y="210.8" width="1" height="18.399999999999977" fill="#c8c8c8"/><rect x="1131.0" y="210.8" width="1" height="18.399999999999977" fill="#c8c8c8"/><rect x="1141.0" y="210.8" width="1" height="18.399999999999977" fill="#c8c8c8"/><rect x="1151.0" y="210.8" width="1" height="18.399999999999977" fill="#c8c8c8"/><rect x="1161.0" y="210.8" width="1" height="18.399999999999977" fill="#c8c8c8"/><rect x="1191.0" y="210.8" width="1" height="18.399999999999977" fill="#c8c8c8"/><circle cx="746.5" cy="220.0" r="1.9" fill="#fff"/><circle cx="756.5" cy="220.0" r="2.3" fill="none" stroke="#b2b2b2" stroke-width="1.7"/><circle cx="766.5" cy="220.0" r="1.9" fill="#fff"/><circle cx="776.5" cy="220.0" r="2.3" fill="none" stroke="#b2b2b2" stroke-width="1.7"/><circle cx="786.5" cy="220.0" r="2.3" fill="none" stroke="#b2b2b2" stroke-width="1.7"/><circle cx="796.5" cy="220.0" r="1.9" fill="#fff"/><circle cx="806.5" cy="220.0" r="2.3" fill="none" stroke="#b2b2b2" stroke-width="1.7"/><circle cx="816.5" cy="220.0" r="2.3" fill="none" stroke="#b2b2b2" stroke-width="1.7"/><circle cx="1086.5" cy="220.0" r="1.9" fill="#fff"/><circle cx="1096.5" cy="220.0" r="2.3" fill="none" stroke="#b2b2b2" stroke-width="1.7"/><circle cx="1176.5" cy="220.0" r="1.9" fill="#fff"/><circle cx="1186.5" cy="220.0" r="2.3" fill="none" stroke="#b2b2b2" stroke-width="1.7"/><rect x="741.5" y="232" width="10.2" height="20" fill="#ffffff"/><rect x="751.5" y="232" width="10.2" height="20" fill="#ffffff"/><rect x="761.5" y="232" width="10.2" height="20" fill="#ffffff"/><rect x="771.5" y="232" width="10.2" height="20" fill="#ffffff"/><rect x="781.5" y="232" width="10.2" height="20" fill="#ffffff"/><rect x="791.5" y="232" width="10.2" height="20" fill="#222222"/><rect x="801.5" y="232" width="10.2" height="20" fill="#222222"/><rect x="811.5" y="232" width="10.2" height="20" fill="#222222"/><rect x="821.5" y="232" width="10.2" height="20" fill="#ffffff"/><rect x="831.5" y="232" width="10.2" height="20" fill="#ffffff"/><rect x="841.5" y="232" width="10.2" height="20" fill="#ffffff"/><rect x="851.5" y="232" width="10.2" height="20" fill="#ffffff"/><rect x="861.5" y="232" width="10.2" height="20" fill="#ffffff"/><rect x="871.5" y="232" width="10.2" height="20" fill="#ffffff"/><rect x="881.5" y="232" width="10.2" height="20" fill="#ffffff"/><rect x="891.5" y="232" width="10.2" height="20" fill="#ffffff"/><rect x="901.5" y="232" width="10.2" height="20" fill="#ffffff"/><rect x="911.5" y="232" width="10.2" height="20" fill="#ffffff"/><rect x="921.5" y="232" width="10.2" height="20" fill="#ffffff"/><rect x="931.5" y="232" width="10.2" height="20" fill="#ffffff"/><rect x="941.5" y="232" width="10.2" height="20" fill="#ffffff"/><rect x="951.5" y="232" width="10.2" height="20" fill="#ffffff"/><rect x="961.5" y="232" width="10.2" height="20" fill="#ffffff"/><rect x="971.5" y="232" width="10.2" height="20" fill="#ffffff"/><rect x="981.5" y="232" width="10.2" height="20" fill="#ffffff"/><rect x="991.5" y="232" width="10.2" height="20" fill="#ffffff"/><rect x="1001.5" y="232" width="10.2" height="20" fill="#ffffff"/><rect x="1011.5" y="232" width="10.2" height="20" fill="#ffffff"/><rect x="1021.5" y="232" width="10.2" height="20" fill="#ffffff"/><rect x="1031.5" y="232" width="10.2" height="20" fill="#ffffff"/><rect x="1041.5" y="232" width="10.2" height="20" fill="#ffffff"/><rect x="1051.5" y="232" width="10.2" height="20" fill="#ffffff"/><rect x="1061.5" y="232" width="10.2" height="20" fill="#ffffff"/><rect x="1071.5" y="232" width="10.2" height="20" fill="#ffffff"/><rect x="1081.5" y="232" width="10.2" height="20" fill="#ffffff"/><rect x="1091.5" y="232" width="10.2" height="20" fill="#ffffff"/><rect x="1101.5" y="232" width="10.2" height="20" fill="#ffffff"/><rect x="1111.5" y="232" width="10.2" height="20" fill="#ffffff"/><rect x="1121.5" y="232" width="10.2" height="20" fill="#ffffff"/><rect x="1131.5" y="232" width="10.2" height="20" fill="#ffffff"/><rect x="1141.5" y="232" width="10.2" height="20" fill="#ffffff"/><rect x="1151.5" y="232" width="10.2" height="20" fill="#ffffff"/><rect x="1161.5" y="232" width="10.2" height="20" fill="#ffffff"/><rect x="1171.5" y="232" width="10.2" height="20" fill="#ffffff"/><rect x="1181.5" y="232" width="10.2" height="20" fill="#ffffff"/><rect x="1191.5" y="232" width="10.2" height="20" fill="#ffffff"/><rect x="751.0" y="233" width="1" height="18" fill="#c8c8c8"/><rect x="761.0" y="233" width="1" height="18" fill="#c8c8c8"/><rect x="771.0" y="233" width="1" height="18" fill="#c8c8c8"/><rect x="781.0" y="233" width="1" height="18" fill="#c8c8c8"/><rect x="801.0" y="233" width="1" height="3.5" fill="#6a6a6a"/><rect x="811.0" y="233" width="1" height="3.5" fill="#6a6a6a"/><rect x="831.0" y="233" width="1" height="18" fill="#c8c8c8"/><rect x="841.0" y="233" width="1" height="18" fill="#c8c8c8"/><rect x="851.0" y="233" width="1" height="18" fill="#c8c8c8"/><rect x="861.0" y="233" width="1" height="18" fill="#c8c8c8"/><rect x="871.0" y="233" width="1" height="18" fill="#c8c8c8"/><rect x="881.0" y="233" width="1" height="18" fill="#c8c8c8"/><rect x="891.0" y="233" width="1" height="18" fill="#c8c8c8"/><rect x="901.0" y="233" width="1" height="18" fill="#c8c8c8"/><rect x="911.0" y="233" width="1" height="18" fill="#c8c8c8"/><rect x="921.0" y="233" width="1" height="18" fill="#c8c8c8"/><rect x="931.0" y="233" width="1" height="18" fill="#c8c8c8"/><rect x="941.0" y="233" width="1" height="18" fill="#c8c8c8"/><rect x="951.0" y="233" width="1" height="18" fill="#c8c8c8"/><rect x="961.0" y="233" width="1" height="18" fill="#c8c8c8"/><rect x="971.0" y="233" width="1" height="18" fill="#c8c8c8"/><rect x="981.0" y="233" width="1" height="18" fill="#c8c8c8"/><rect x="991.0" y="233" width="1" height="18" fill="#c8c8c8"/><rect x="1001.0" y="233" width="1" height="18" fill="#c8c8c8"/><rect x="1011.0" y="233" width="1" height="18" fill="#c8c8c8"/><rect x="1021.0" y="233" width="1" height="18" fill="#c8c8c8"/><rect x="1031.0" y="233" width="1" height="18" fill="#c8c8c8"/><rect x="1041.0" y="233" width="1" height="18" fill="#c8c8c8"/><rect x="1051.0" y="233" width="1" height="18" fill="#c8c8c8"/><rect x="1061.0" y="233" width="1" height="18" fill="#c8c8c8"/><rect x="1071.0" y="233" width="1" height="18" fill="#c8c8c8"/><rect x="1081.0" y="233" width="1" height="18" fill="#c8c8c8"/><rect x="1091.0" y="233" width="1" height="18" fill="#c8c8c8"/><rect x="1101.0" y="233" width="1" height="18" fill="#c8c8c8"/><rect x="1111.0" y="233" width="1" height="18" fill="#c8c8c8"/><rect x="1121.0" y="233" width="1" height="18" fill="#c8c8c8"/><rect x="1131.0" y="233" width="1" height="18" fill="#c8c8c8"/><rect x="1141.0" y="233" width="1" height="18" fill="#c8c8c8"/><rect x="1151.0" y="233" width="1" height="18" fill="#c8c8c8"/><rect x="1161.0" y="233" width="1" height="18" fill="#c8c8c8"/><rect x="1171.0" y="233" width="1" height="18" fill="#c8c8c8"/><rect x="1181.0" y="233" width="1" height="18" fill="#c8c8c8"/><rect x="1191.0" y="233" width="1" height="18" fill="#c8c8c8"/><circle cx="746.5" cy="242.0" r="2.3" fill="none" stroke="#b2b2b2" stroke-width="1.7"/><circle cx="796.5" cy="242.0" r="1.9" fill="#fff"/><circle cx="806.5" cy="242.0" r="1.9" fill="#fff"/><circle cx="826.5" cy="242.0" r="2.3" fill="none" stroke="#b2b2b2" stroke-width="1.7"/><rect x="741.5" y="254" width="10.2" height="20" fill="#ffffff"/><rect x="751.5" y="254" width="10.2" height="20" fill="#ffffff"/><rect x="761.5" y="254" width="10.2" height="20" fill="#ffffff"/><rect x="771.5" y="254" width="10.2" height="20" fill="#ffffff"/><rect x="781.5" y="254" width="10.2" height="20" fill="#ffffff"/><rect x="791.5" y="254" width="10.2" height="20" fill="#222222"/><rect x="801.5" y="254" width="10.2" height="20" fill="#222222"/><rect x="811.5" y="254" width="10.2" height="20" fill="#222222"/><rect x="821.5" y="254" width="10.2" height="20" fill="#222222"/><rect x="831.5" y="254" width="10.2" height="20" fill="#222222"/><rect x="841.5" y="254" width="10.2" height="20" fill="#ffffff"/><rect x="851.5" y="254" width="10.2" height="20" fill="#ffffff"/><rect x="861.5" y="254" width="10.2" height="20" fill="#ffffff"/><rect x="871.5" y="254" width="10.2" height="20" fill="#ffffff"/><rect x="881.5" y="254" width="10.2" height="20" fill="#ffffff"/><rect x="891.5" y="254" width="10.2" height="20" fill="#ffffff"/><rect x="901.5" y="254" width="10.2" height="20" fill="#ffffff"/><rect x="911.5" y="254" width="10.2" height="20" fill="#ffffff"/><rect x="921.5" y="254" width="10.2" height="20" fill="#ffffff"/><rect x="931.5" y="254" width="10.2" height="20" fill="#ffffff"/><rect x="941.5" y="254" width="10.2" height="20" fill="#ffffff"/><rect x="951.5" y="254" width="10.2" height="20" fill="#ffffff"/><rect x="961.5" y="254" width="10.2" height="20" fill="#ffffff"/><rect x="971.5" y="254" width="10.2" height="20" fill="#ffffff"/><rect x="981.5" y="254" width="10.2" height="20" fill="#ffffff"/><rect x="991.5" y="254" width="10.2" height="20" fill="#ffffff"/><rect x="1001.5" y="254" width="10.2" height="20" fill="#ffffff"/><rect x="1011.5" y="254" width="10.2" height="20" fill="#ffffff"/><rect x="1021.5" y="254" width="10.2" height="20" fill="#ffffff"/><rect x="1031.5" y="254" width="10.2" height="20" fill="#ffffff"/><rect x="1041.5" y="254" width="10.2" height="20" fill="#ffffff"/><rect x="1051.5" y="254" width="10.2" height="20" fill="#ffffff"/><rect x="1061.5" y="254" width="10.2" height="20" fill="#ffffff"/><rect x="1071.5" y="254" width="10.2" height="20" fill="#ffffff"/><rect x="1081.5" y="254" width="10.2" height="20" fill="#ffffff"/><rect x="1091.5" y="254" width="10.2" height="20" fill="#ffffff"/><rect x="1101.5" y="254" width="10.2" height="20" fill="#ffffff"/><rect x="1111.5" y="254" width="10.2" height="20" fill="#ffffff"/><rect x="1121.5" y="254" width="10.2" height="20" fill="#ffffff"/><rect x="1131.5" y="254" width="10.2" height="20" fill="#ffffff"/><rect x="1141.5" y="254" width="10.2" height="20" fill="#ffffff"/><rect x="1151.5" y="254" width="10.2" height="20" fill="#ffffff"/><rect x="1161.5" y="254" width="10.2" height="20" fill="#ffffff"/><rect x="1171.5" y="254" width="10.2" height="20" fill="#ffffff"/><rect x="1181.5" y="254" width="10.2" height="20" fill="#ffffff"/><rect x="1191.5" y="254" width="10.2" height="20" fill="#ffffff"/><rect x="751.0" y="255" width="1" height="18" fill="#c8c8c8"/><rect x="761.0" y="255" width="1" height="18" fill="#c8c8c8"/><rect x="771.0" y="255" width="1" height="18" fill="#c8c8c8"/><rect x="781.0" y="255" width="1" height="18" fill="#c8c8c8"/><rect x="801.0" y="255" width="1" height="3.5" fill="#6a6a6a"/><rect x="811.0" y="255" width="1" height="3.5" fill="#6a6a6a"/><rect x="821.0" y="255.5" width="1" height="17" fill="#777"/><rect x="831.0" y="255" width="1" height="3.5" fill="#6a6a6a"/><rect x="851.0" y="255" width="1" height="18" fill="#c8c8c8"/><rect x="861.0" y="255" width="1" height="18" fill="#c8c8c8"/><rect x="871.0" y="255" width="1" height="18" fill="#c8c8c8"/><rect x="881.0" y="255" width="1" height="18" fill="#c8c8c8"/><rect x="891.0" y="255" width="1" height="18" fill="#c8c8c8"/><rect x="901.0" y="255" width="1" height="18" fill="#c8c8c8"/><rect x="911.0" y="255" width="1" height="18" fill="#c8c8c8"/><rect x="921.0" y="255" width="1" height="18" fill="#c8c8c8"/><rect x="931.0" y="255" width="1" height="18" fill="#c8c8c8"/><rect x="941.0" y="255" width="1" height="18" fill="#c8c8c8"/><rect x="951.0" y="255" width="1" height="18" fill="#c8c8c8"/><rect x="961.0" y="255" width="1" height="18" fill="#c8c8c8"/><rect x="971.0" y="255" width="1" height="18" fill="#c8c8c8"/><rect x="981.0" y="255" width="1" height="18" fill="#c8c8c8"/><rect x="991.0" y="255" width="1" height="18" fill="#c8c8c8"/><rect x="1001.0" y="255" width="1" height="18" fill="#c8c8c8"/><rect x="1011.0" y="255" width="1" height="18" fill="#c8c8c8"/><rect x="1021.0" y="255" width="1" height="18" fill="#c8c8c8"/><rect x="1031.0" y="255" width="1" height="18" fill="#c8c8c8"/><rect x="1041.0" y="255" width="1" height="18" fill="#c8c8c8"/><rect x="1051.0" y="255" width="1" height="18" fill="#c8c8c8"/><rect x="1061.0" y="255" width="1" height="18" fill="#c8c8c8"/><rect x="1071.0" y="255" width="1" height="18" fill="#c8c8c8"/><rect x="1081.0" y="255" width="1" height="18" fill="#c8c8c8"/><rect x="1091.0" y="255" width="1" height="18" fill="#c8c8c8"/><rect x="1101.0" y="255" width="1" height="18" fill="#c8c8c8"/><rect x="1111.0" y="255" width="1" height="18" fill="#c8c8c8"/><rect x="1121.0" y="255" width="1" height="18" fill="#c8c8c8"/><rect x="1131.0" y="255" width="1" height="18" fill="#c8c8c8"/><rect x="1141.0" y="255" width="1" height="18" fill="#c8c8c8"/><rect x="1151.0" y="255" width="1" height="18" fill="#c8c8c8"/><rect x="1161.0" y="255" width="1" height="18" fill="#c8c8c8"/><rect x="1171.0" y="255" width="1" height="18" fill="#c8c8c8"/><rect x="1181.0" y="255" width="1" height="18" fill="#c8c8c8"/><rect x="1191.0" y="255" width="1" height="18" fill="#c8c8c8"/><circle cx="746.5" cy="264.0" r="2.3" fill="none" stroke="#b2b2b2" stroke-width="1.7"/><circle cx="796.5" cy="264.0" r="1.9" fill="#fff"/><circle cx="806.5" cy="264.0" r="1.9" fill="#fff"/><circle cx="826.5" cy="264.0" r="1.9" fill="#fff"/><circle cx="846.5" cy="264.0" r="2.3" fill="none" stroke="#b2b2b2" stroke-width="1.7"/></svg><svg style="left:0;top:0" width="1726" height="997" shape-rendering="crispEdges"><rect x="1201.5" y="189" width="10" height="18.80000000000001" fill="#8e8e8e"/><rect x="1211.5" y="189" width="10" height="18.80000000000001" fill="#8a8a8a"/><rect x="1211.0" y="189" width="1" height="18.80000000000001" fill="#959595"/><rect x="1221.5" y="189" width="10" height="18.80000000000001" fill="#8c8c8c"/><rect x="1221.0" y="189" width="1" height="18.80000000000001" fill="#959595"/><rect x="1231.5" y="189" width="10" height="18.80000000000001" fill="#9a9a9a"/><rect x="1231.0" y="189" width="1" height="18.80000000000001" fill="#959595"/><rect x="1241.5" y="189" width="10" height="18.80000000000001" fill="#898989"/><rect x="1241.0" y="189" width="1" height="18.80000000000001" fill="#959595"/><rect x="1251.5" y="189" width="10" height="18.80000000000001" fill="#8e8e8e"/><rect x="1251.0" y="189" width="1" height="18.80000000000001" fill="#959595"/><rect x="1261.5" y="189" width="10" height="18.80000000000001" fill="#909090"/><rect x="1261.0" y="189" width="1" height="18.80000000000001" fill="#959595"/><rect x="1271.5" y="189" width="10" height="18.80000000000001" fill="#8a8a8a"/><rect x="1271.0" y="189" width="1" height="18.80000000000001" fill="#959595"/><rect x="1281.5" y="189" width="10" height="18.80000000000001" fill="#999999"/><rect x="1281.0" y="189" width="1" height="18.80000000000001" fill="#959595"/><rect x="1291.5" y="189" width="10" height="18.80000000000001" fill="#8c8c8c"/><rect x="1291.0" y="189" width="1" height="18.80000000000001" fill="#959595"/><rect x="1301.5" y="189" width="10" height="18.80000000000001" fill="#8e8e8e"/><rect x="1301.0" y="189" width="1" height="18.80000000000001" fill="#959595"/><rect x="1311.5" y="189" width="10" height="18.80000000000001" fill="#8a8a8a"/><rect x="1311.0" y="189" width="1" height="18.80000000000001" fill="#959595"/><rect x="1321.5" y="189" width="10" height="18.80000000000001" fill="#909090"/><rect x="1321.0" y="189" width="1" height="18.80000000000001" fill="#959595"/><rect x="1331.5" y="189" width="10" height="18.80000000000001" fill="#989898"/><rect x="1331.0" y="189" width="1" height="18.80000000000001" fill="#959595"/><rect x="1341.5" y="189" width="10" height="18.80000000000001" fill="#8c8c8c"/><rect x="1341.0" y="189" width="1" height="18.80000000000001" fill="#959595"/><rect x="1351.5" y="189" width="8.5" height="18.80000000000001" fill="#8e8e8e"/><rect x="1351.0" y="189" width="1" height="18.80000000000001" fill="#959595"/><rect x="1201.5" y="209.8" width="10" height="20.399999999999977" fill="#8e8e8e"/><rect x="1211.5" y="209.8" width="10" height="20.399999999999977" fill="#8a8a8a"/><rect x="1211.0" y="209.8" width="1" height="20.399999999999977" fill="#959595"/><rect x="1221.5" y="209.8" width="10" height="20.399999999999977" fill="#8c8c8c"/><rect x="1221.0" y="209.8" width="1" height="20.399999999999977" fill="#959595"/><rect x="1231.5" y="209.8" width="10" height="20.399999999999977" fill="#9a9a9a"/><rect x="1231.0" y="209.8" width="1" height="20.399999999999977" fill="#959595"/><rect x="1241.5" y="209.8" width="10" height="20.399999999999977" fill="#898989"/><rect x="1241.0" y="209.8" width="1" height="20.399999999999977" fill="#959595"/><rect x="1251.5" y="209.8" width="10" height="20.399999999999977" fill="#8e8e8e"/><rect x="1251.0" y="209.8" width="1" height="20.399999999999977" fill="#959595"/><rect x="1261.5" y="209.8" width="10" height="20.399999999999977" fill="#909090"/><rect x="1261.0" y="209.8" width="1" height="20.399999999999977" fill="#959595"/><rect x="1271.5" y="209.8" width="10" height="20.399999999999977" fill="#8a8a8a"/><rect x="1271.0" y="209.8" width="1" height="20.399999999999977" fill="#959595"/><rect x="1281.5" y="209.8" width="10" height="20.399999999999977" fill="#999999"/><rect x="1281.0" y="209.8" width="1" height="20.399999999999977" fill="#959595"/><rect x="1291.5" y="209.8" width="10" height="20.399999999999977" fill="#8c8c8c"/><rect x="1291.0" y="209.8" width="1" height="20.399999999999977" fill="#959595"/><rect x="1301.5" y="209.8" width="10" height="20.399999999999977" fill="#8e8e8e"/><rect x="1301.0" y="209.8" width="1" height="20.399999999999977" fill="#959595"/><rect x="1311.5" y="209.8" width="10" height="20.399999999999977" fill="#8a8a8a"/><rect x="1311.0" y="209.8" width="1" height="20.399999999999977" fill="#959595"/><rect x="1321.5" y="209.8" width="10" height="20.399999999999977" fill="#909090"/><rect x="1321.0" y="209.8" width="1" height="20.399999999999977" fill="#959595"/><rect x="1331.5" y="209.8" width="10" height="20.399999999999977" fill="#989898"/><rect x="1331.0" y="209.8" width="1" height="20.399999999999977" fill="#959595"/><rect x="1341.5" y="209.8" width="10" height="20.399999999999977" fill="#8c8c8c"/><rect x="1341.0" y="209.8" width="1" height="20.399999999999977" fill="#959595"/><rect x="1351.5" y="209.8" width="8.5" height="20.399999999999977" fill="#8e8e8e"/><rect x="1351.0" y="209.8" width="1" height="20.399999999999977" fill="#959595"/><rect x="1201.5" y="232" width="10" height="20" fill="#8e8e8e"/><rect x="1211.5" y="232" width="10" height="20" fill="#8a8a8a"/><rect x="1211.0" y="232" width="1" height="20" fill="#959595"/><rect x="1221.5" y="232" width="10" height="20" fill="#8c8c8c"/><rect x="1221.0" y="232" width="1" height="20" fill="#959595"/><rect x="1231.5" y="232" width="10" height="20" fill="#9a9a9a"/><rect x="1231.0" y="232" width="1" height="20" fill="#959595"/><rect x="1241.5" y="232" width="10" height="20" fill="#898989"/><rect x="1241.0" y="232" width="1" height="20" fill="#959595"/><rect x="1251.5" y="232" width="10" height="20" fill="#8e8e8e"/><rect x="1251.0" y="232" width="1" height="20" fill="#959595"/><rect x="1261.5" y="232" width="10" height="20" fill="#909090"/><rect x="1261.0" y="232" width="1" height="20" fill="#959595"/><rect x="1271.5" y="232" width="10" height="20" fill="#8a8a8a"/><rect x="1271.0" y="232" width="1" height="20" fill="#959595"/><rect x="1281.5" y="232" width="10" height="20" fill="#999999"/><rect x="1281.0" y="232" width="1" height="20" fill="#959595"/><rect x="1291.5" y="232" width="10" height="20" fill="#8c8c8c"/><rect x="1291.0" y="232" width="1" height="20" fill="#959595"/><rect x="1301.5" y="232" width="10" height="20" fill="#8e8e8e"/><rect x="1301.0" y="232" width="1" height="20" fill="#959595"/><rect x="1311.5" y="232" width="10" height="20" fill="#8a8a8a"/><rect x="1311.0" y="232" width="1" height="20" fill="#959595"/><rect x="1321.5" y="232" width="10" height="20" fill="#909090"/><rect x="1321.0" y="232" width="1" height="20" fill="#959595"/><rect x="1331.5" y="232" width="10" height="20" fill="#989898"/><rect x="1331.0" y="232" width="1" height="20" fill="#959595"/><rect x="1341.5" y="232" width="10" height="20" fill="#8c8c8c"/><rect x="1341.0" y="232" width="1" height="20" fill="#959595"/><rect x="1351.5" y="232" width="8.5" height="20" fill="#8e8e8e"/><rect x="1351.0" y="232" width="1" height="20" fill="#959595"/><rect x="1201.5" y="254" width="10" height="20" fill="#8e8e8e"/><rect x="1211.5" y="254" width="10" height="20" fill="#8a8a8a"/><rect x="1211.0" y="254" width="1" height="20" fill="#959595"/><rect x="1221.5" y="254" width="10" height="20" fill="#8c8c8c"/><rect x="1221.0" y="254" width="1" height="20" fill="#959595"/><rect x="1231.5" y="254" width="10" height="20" fill="#9a9a9a"/><rect x="1231.0" y="254" width="1" height="20" fill="#959595"/><rect x="1241.5" y="254" width="10" height="20" fill="#898989"/><rect x="1241.0" y="254" width="1" height="20" fill="#959595"/><rect x="1251.5" y="254" width="10" height="20" fill="#8e8e8e"/><rect x="1251.0" y="254" width="1" height="20" fill="#959595"/><rect x="1261.5" y="254" width="10" height="20" fill="#909090"/><rect x="1261.0" y="254" width="1" height="20" fill="#959595"/><rect x="1271.5" y="254" width="10" height="20" fill="#8a8a8a"/><rect x="1271.0" y="254" width="1" height="20" fill="#959595"/><rect x="1281.5" y="254" width="10" height="20" fill="#999999"/><rect x="1281.0" y="254" width="1" height="20" fill="#959595"/><rect x="1291.5" y="254" width="10" height="20" fill="#8c8c8c"/><rect x="1291.0" y="254" width="1" height="20" fill="#959595"/><rect x="1301.5" y="254" width="10" height="20" fill="#8e8e8e"/><rect x="1301.0" y="254" width="1" height="20" fill="#959595"/><rect x="1311.5" y="254" width="10" height="20" fill="#8a8a8a"/><rect x="1311.0" y="254" width="1" height="20" fill="#959595"/><rect x="1321.5" y="254" width="10" height="20" fill="#909090"/><rect x="1321.0" y="254" width="1" height="20" fill="#959595"/><rect x="1331.5" y="254" width="10" height="20" fill="#989898"/><rect x="1331.0" y="254" width="1" height="20" fill="#959595"/><rect x="1341.5" y="254" width="10" height="20" fill="#8c8c8c"/><rect x="1341.0" y="254" width="1" height="20" fill="#959595"/><rect x="1351.5" y="254" width="8.5" height="20" fill="#8e8e8e"/><rect x="1351.0" y="254" width="1" height="20" fill="#959595"/></svg><div class="a" style="left:1201.5px;top:207.8px;width:158.5px;height:1px;background:#c0c0c0;"></div><div class="a" style="left:1201.5px;top:230.0px;width:158.5px;height:1px;background:#c0c0c0;"></div><div class="a" style="left:1201.5px;top:252.3px;width:158.5px;height:1px;background:#c0c0c0;"></div><div class="a" style="left:741.5px;top:207.8px;width:460px;height:2px;background:#2e2e2e;"></div><div class="a" style="left:741.5px;top:230.2px;width:460px;height:1.8px;background:#2a2a2a;"></div><div class="a" style="left:741.5px;top:252px;width:460px;height:2px;background:#2a2a2a;"></div><div class="a" style="left:792px;top:208px;width:11px;height:1.2px;background:#e8e8e8;"></div><div class="a" style="left:792px;top:252px;width:11px;height:1.2px;background:#e8e8e8;"></div><div class="a" style="left:1360px;top:168px;width:5px;height:106px;background:#1f1f1f;"></div><div class="a" style="left:1360px;top:227px;width:5px;height:47px;background:#7a7a7a;border-radius:2px 2px 0 0"></div><div class="t" style="left:771.6px;width:30px;text-align:center;top:170.1px;font-size:13.5px;font-family:'Liberation Serif',serif;font-weight:bold;color:#f2f2f2;letter-spacing:-0.8px">5</div><div class="t" style="left:825px;width:30px;text-align:center;top:170.1px;font-size:13.5px;font-family:'Liberation Serif',serif;font-weight:bold;color:#f2f2f2;letter-spacing:-0.8px">10</div><div class="t" style="left:875px;width:30px;text-align:center;top:170.1px;font-size:13.5px;font-family:'Liberation Serif',serif;font-weight:bold;color:#f2f2f2;letter-spacing:-0.8px">15</div><div class="t" style="left:925px;width:30px;text-align:center;top:170.1px;font-size:13.5px;font-family:'Liberation Serif',serif;font-weight:bold;color:#f2f2f2;letter-spacing:-0.8px">20</div><div class="t" style="left:975px;width:30px;text-align:center;top:170.1px;font-size:13.5px;font-family:'Liberation Serif',serif;font-weight:bold;color:#f2f2f2;letter-spacing:-0.8px">25</div><div class="t" style="left:1025px;width:30px;text-align:center;top:170.1px;font-size:13.5px;font-family:'Liberation Serif',serif;font-weight:bold;color:#f2f2f2;letter-spacing:-0.8px">30</div><div class="t" style="left:1075px;width:30px;text-align:center;top:170.1px;font-size:13.5px;font-family:'Liberation Serif',serif;font-weight:bold;color:#f2f2f2;letter-spacing:-0.8px">35</div><div class="t" style="left:1125px;width:30px;text-align:center;top:170.1px;font-size:13.5px;font-family:'Liberation Serif',serif;font-weight:bold;color:#f2f2f2;letter-spacing:-0.8px">40</div><div class="t" style="left:1175px;width:30px;text-align:center;top:170.1px;font-size:13.5px;font-family:'Liberation Serif',serif;font-weight:bold;color:#f2f2f2;letter-spacing:-0.8px">45</div><div class="t" style="left:1225px;width:30px;text-align:center;top:170.1px;font-size:13.5px;font-family:'Liberation Serif',serif;font-weight:bold;color:#f2f2f2;letter-spacing:-0.8px">50</div><div class="t" style="left:1275px;width:30px;text-align:center;top:170.1px;font-size:13.5px;font-family:'Liberation Serif',serif;font-weight:bold;color:#f2f2f2;letter-spacing:-0.8px">55</div><div class="t" style="left:1325px;width:30px;text-align:center;top:170.1px;font-size:13.5px;font-family:'Liberation Serif',serif;font-weight:bold;color:#f2f2f2;letter-spacing:-0.8px">60</div><div class="a" style="left:791.6px;top:168.3px;width:11px;height:19.2px;background:rgba(150,25,25,0.6);border:1px solid #d01515"></div><div class="a" style="left:796px;top:187px;width:2px;height:87px;background:#b81818;"></div><div class="a" style="left:493px;top:282px;width:872px;height:25px;background:linear-gradient(#000,#1a1a1a 45%,#353535);"></div><div class="a" style="left:493px;top:307px;width:867px;height:1px;background:#282828;"></div><div class="a" style="left:497px;top:284px;width:47px;height:21px;background:#2b2b2b;border-radius:4px 4px 0 0"></div><div class="t" style="left:505.2px;top:289.34px;font-size:12px;color:#ffffff;font-family:'Liberation Sans',sans-serif;">Stage</div><div class="a" style="left:493px;top:308px;width:867px;height:381px;background:#333333;"></div><div class="a" style="left:1360px;top:307px;width:5px;height:390px;background:#262626;"></div><div class="a" style="left:1360px;top:482px;width:5px;height:19px;background:#8a8a8a;border-radius:2px"></div><div class="a" style="left:493px;top:689px;width:872px;height:8px;background:#242424;"></div><div class="a" style="left:925px;top:691px;width:43px;height:5px;background:#8a8a8a;border-radius:3px"></div><div class="a" style="left:493px;top:697px;width:880px;height:8px;background:#1b1b1b;"></div><div class="a" style="left:1255px;top:318px;width:100px;height:100px;background:#232323;"></div><div class="a" style="left:1300px;top:361px;width:10px;height:10px;background:#555555;"></div><div class="a" style="left:1303px;top:366px;width:4px;height:2px;background:#888;"></div><svg style="left:800px;top:581px" width="40" height="40" viewBox="0 0 40 40"><path d="M20 3 V37 M3 20 H37" stroke="#a8a8a8" stroke-width="2.4"/></svg><svg style="left:0;top:0" width="1726" height="997" shape-rendering="crispEdges"><rect x="720" y="396" width="279" height="146" fill="#8f7014"/><rect x="720" y="396" width="279" height="4.5" fill="#9a7a1c"/><rect x="725.5" y="400.5" width="273.5" height="138" fill="#f1dd8b"/></svg><svg style="left:0;top:0" width="1726" height="997"><path d="M788 407 H805 V410 H812 V413 H815 V416 H818 V419 H822 V423 H818 V426 H812 V423 H803 V419 H796 V416 H785 V419 H775 V416 H778 V413 H782 V410 H788 Z" fill="#8a6a12" shape-rendering="crispEdges"/><path d="M861.5 407 H878 V410 H885 V413 H888 V416 H891 V419 H881 V416 H871 V419 H858 V426 H848 V423 H845 V416 H848 V413 H855 V410 H861.5 Z" fill="#8a6a12" shape-rendering="crispEdges"/><rect x="778" y="416" width="7" height="3" fill="#b3a26a"/><rect x="868" y="416" width="3" height="3" fill="#b3a26a"/><rect x="881" y="416" width="7" height="3" fill="#b3a26a"/><ellipse cx="803" cy="446.3" rx="15" ry="19.3" fill="#8a6a12"/><ellipse cx="806" cy="435.5" rx="5.5" ry="4.6" fill="#f1dd8b" opacity="0.9"/><path d="M789 453 Q803 452 817 453 Q815 464 803 465.6 Q791 464 789 453Z" fill="#b3a26a"/><ellipse cx="803" cy="456" rx="6" ry="3.5" fill="#8a6a12" opacity="0.5"/><rect x="808" y="442" width="4" height="3.4" fill="#e8d49a"/><ellipse cx="863" cy="446.3" rx="15" ry="19.3" fill="#8a6a12"/><ellipse cx="866" cy="435.5" rx="5.5" ry="4.6" fill="#f1dd8b" opacity="0.9"/><path d="M849 453 Q863 452 877 453 Q875 464 863 465.6 Q851 464 849 453Z" fill="#b3a26a"/><ellipse cx="863" cy="456" rx="6" ry="3.5" fill="#8a6a12" opacity="0.5"/><rect x="868" y="442" width="4" height="3.4" fill="#e8d49a"/><ellipse cx="831.5" cy="483.3" rx="13.3" ry="8.5" fill="#8a6a12"/><ellipse cx="829.5" cy="484.5" rx="8.5" ry="4.8" fill="#b3a26a"/><rect x="808" y="512" width="20" height="21" rx="4" fill="#8a6a12"/><rect x="838" y="512" width="20" height="21" rx="4" fill="#8a6a12"/><rect x="811" y="510" width="13" height="3" fill="#8a6a12"/><rect x="841" y="510" width="13" height="3" fill="#8a6a12"/><rect x="827" y="516" width="12" height="11" fill="#8a6a12"/><rect x="812" y="514" width="14" height="5" fill="#b3a26a"/><rect x="812" y="521" width="12" height="3" fill="#b3a26a"/><rect x="840" y="514" width="15" height="5" fill="#b3a26a"/><rect x="841" y="521" width="12" height="3" fill="#b3a26a"/><rect x="831" y="519" width="3" height="6" fill="#b3a26a"/><rect x="812" y="526" width="13" height="3" fill="#b3a26a" opacity="0.6"/><rect x="843" y="527" width="12" height="3" fill="#b3a26a"/><polygon points="728.6,467.5 820.2,400 984,467.5 820.2,535.3" fill="rgba(255,172,0,0.58)"/></svg><svg style="left:0;top:0" width="1726" height="997" shape-rendering="crispEdges"><rect x="906" y="384" width="155" height="167" fill="#961a1a"/><rect x="1049" y="415" width="121" height="118" fill="#961a1a"/><rect x="1049" y="415" width="12" height="118" fill="#d61212"/><rect x="906" y="396" width="93" height="146" fill="#cb6b12"/><rect x="999" y="403" width="50" height="136" fill="#cd6b12"/><rect x="1049" y="424" width="43" height="93" fill="#cd6b12"/><rect x="1049" y="424" width="12" height="93" fill="#dd6a14"/><rect x="1092" y="446" width="44" height="53" fill="#cd6b12"/></svg><svg style="left:0;top:0" width="1726" height="997"><polygon points="906,401 991,401 1128.5,471.5 991,539 906,539" fill="#f59d42"/><polygon points="906,436 983.7,467.5 906,499" fill="#fba422"/><polygon points="1049,430.7 1061,436.9 1061,504.6 1049,510.5" fill="#fd7a22"/><polygon points="1049,424 1061,424 1061,436.9 1049,430.7" fill="#e4661a"/><polygon points="1049,510.5 1061,504.6 1061,517 1049,517" fill="#e4661a"/></svg><div class="a" style="left:1373px;top:45px;width:329px;height:652px;background:#333333;"></div><div class="a" style="left:1373px;top:697px;width:329px;height:8px;background:#1b1b1b;"></div><svg style="left:1380.5px;top:52.5px" width="17" height="17" viewBox="0 0 17 17"><path d="M8.5 0.8 L15.8 4.3 V12.7 L8.5 16.2 L1.2 12.7 V4.3 Z" fill="#fff"/><path d="M4.5 4.3 L8.5 2.6 L12.5 4.3 L8.5 6.2 Z" fill="#333"/><path d="M11.2 8.5 L14 7.2 V11.6 L11.2 13 Z" fill="#333"/></svg><div class="t" style="left:1401.8px;top:56.32px;font-size:12.5px;color:#f0f0f0;font-family:'Liberation Sans',sans-serif;">Sprite Entity Asset</div><div class="t" style="left:1381px;top:80.79px;font-size:16.9px;color:#f0f0f0;font-family:'Liberation Sans',sans-serif;font-weight:bold;">ID</div><div class="a" style="left:1381px;top:107.4px;width:147px;height:24.5px;background:#595959;border-radius:4px"></div><div class="t" style="left:1387.5px;top:113.16px;font-size:12.8px;color:#e0e0e0;font-family:'Liberation Sans',sans-serif;">charactertemplate</div><div class="t" style="left:1381px;top:144.79px;font-size:16.9px;color:#f0f0f0;font-family:'Liberation Sans',sans-serif;font-weight:bold;">Export</div><div class="a" style="left:1381px;top:170px;width:42px;height:25.5px;background:#1f7bd6;border-radius:13px"></div><svg style="left:1402px;top:174px" width="18" height="18" viewBox="0 0 18 18"><circle cx="9" cy="9" r="8.6" fill="#2d2d2d"/></svg><div class="t" style="left:1381px;top:210.59px;font-size:16.9px;color:#f0f0f0;font-family:'Liberation Sans',sans-serif;font-weight:bold;">Tags</div><div class="a" style="left:1381px;top:236.3px;width:156px;height:29.5px;background:#595959;border-radius:4px"></div><div class="t" style="left:1381px;top:281.69px;font-size:16.9px;color:#f0f0f0;font-family:'Liberation Sans',sans-serif;font-weight:bold;">Palette Map</div><div class="a" style="left:1381px;top:307.3px;width:147px;height:24.5px;background:#595959;border-radius:4px"></div><div class="t" style="left:1387.5px;top:313.09px;font-size:12.3px;color:#e0e0e0;font-family:'Liberation Sans',sans-serif;">costumes.palettes</div><div class="a" style="left:1381px;top:332px;width:200px;height:30px;background:#595959;border-radius:4px"></div><div class="t" style="left:1388px;top:340.28px;font-size:14.2px;color:#e0e0e0;font-family:'Liberation Sans',sans-serif;">Base</div><svg style="left:1556px;top:342.0px" width="20" height="10" viewBox="0 0 20 10"><path d="M2 1.5 L10 8.5 L18 1.5" fill="none" stroke="#f0f0f0" stroke-width="2"/></svg><div class="t" style="left:1381px;top:374.79px;font-size:16.9px;color:#f0f0f0;font-family:'Liberation Sans',sans-serif;font-weight:bold;">Plugins</div><div class="a" style="left:1381px;top:400.4px;width:41px;height:24.7px;background:#1f7bd6;border-radius:13px"></div><svg style="left:1401px;top:404px" width="18" height="18" viewBox="0 0 18 18"><circle cx="9" cy="9" r="8.4" fill="#2d2d2d"/></svg><div class="a" style="left:1422px;top:399.7px;width:259px;height:33.8px;background:#232323;border:1px solid #1a1a1a;border-radius:2px"></div><div class="t" style="left:1430.6px;top:409.38px;font-size:16.8px;color:#9a9a9a;font-family:'Liberation Sans',sans-serif;">Fraymakers Metadata Definitions</div><div class="t" style="left:1381px;top:445.49px;font-size:16.9px;color:#f0f0f0;font-family:'Liberation Sans',sans-serif;font-weight:bold;">Object Type</div><div class="a" style="left:1381px;top:472px;width:200px;height:29.5px;background:#595959;border-radius:4px"></div><div class="t" style="left:1388px;top:479.98px;font-size:14.2px;color:#e0e0e0;font-family:'Liberation Sans',sans-serif;">Character</div><svg style="left:1556px;top:481.75px" width="20" height="10" viewBox="0 0 20 10"><path d="M2 1.5 L10 8.5 L18 1.5" fill="none" stroke="#f0f0f0" stroke-width="2"/></svg><div class="t" style="left:1381px;top:513.79px;font-size:16.9px;color:#f0f0f0;font-family:'Liberation Sans',sans-serif;font-weight:bold;">Spritesheet Group</div><div class="a" style="left:1381px;top:540px;width:147px;height:24.7px;background:#595959;border-radius:4px"></div><div class="a" style="left:253px;top:705px;width:1449px;height:51px;background:#333333;"></div><div class="t" style="left:262.2px;top:723.45px;font-size:16.6px;color:#f2f2f2;font-family:'Liberation Sans',sans-serif;">charactertemplate: Frame Script Layer, Frame 6</div><div class="a" style="left:253px;top:756px;width:1449px;height:182px;background:#1e1e1e;"></div><div class="a" style="left:1687px;top:756px;width:1px;height:182px;background:#3a3a3a;"></div><div class="a" style="left:253px;top:938px;width:1473px;height:29px;background:#151515;"></div><div class="a" style="left:253px;top:938px;width:1449px;height:1px;background:#262626;"></div><div class="a" style="left:227px;top:941px;width:60px;height:24px;background:#2d2d2d;border-radius:4px"></div><svg style="left:234px;top:946px" width="10" height="13" viewBox="0 0 10 13"><path d="M0.8 1.5 a0.8 0.8 0 0 1 0.8 -0.8 H6.3 L9.2 3.7 V11.5 a0.8 0.8 0 0 1 -0.8 0.8 H1.6 a0.8 0.8 0 0 1 -0.8 -0.8Z" fill="#fff"/><path d="M3 6 L2 8 L3 10 M7 6 L8 8 L7 10 M5.5 5.5 L4.5 10.5" fill="none" stroke="#2d2d2d" stroke-width="0.9"/></svg><div class="t" style="left:248px;top:947.34px;font-size:12px;color:#ffffff;font-family:'Liberation Sans',sans-serif;">Script</div><div class="t" style="left:284.5px;top:760.29px;font-size:12.8px;color:#858585;font-family:'Liberation Mono',monospace;">1</div><div class="t" style="left:318px;top:760.27px;font-size:12.82px;color:#6a9955;font-family:'Liberation Mono',monospace;">//calls&nbsp;a&nbsp;light&nbsp;sparkle&nbsp;effect</div><div class="t" style="left:284.5px;top:779.29px;font-size:12.8px;color:#858585;font-family:'Liberation Mono',monospace;">2</div><div class="t" style="left:318px;top:779.27px;font-size:12.82px;color:#d4d4d4;font-family:'Liberation Mono',monospace;">match.createVfx(</div><div class="t" style="left:441.04px;top:779.27px;font-size:12.82px;color:#569cd6;font-family:'Liberation Mono',monospace;">new</div><div class="t" style="left:464.11px;top:779.27px;font-size:12.82px;color:#d4d4d4;font-family:'Liberation Mono',monospace;">&nbsp;</div><div class="t" style="left:471.8px;top:779.27px;font-size:12.82px;color:#4ec9b0;font-family:'Liberation Mono',monospace;">VfxStats</div><div class="t" style="left:533.32px;top:779.27px;font-size:12.82px;color:#d4d4d4;font-family:'Liberation Mono',monospace;">({spriteContent:&nbsp;</div><div class="t" style="left:664.05px;top:779.27px;font-size:12.82px;color:#ce9178;font-family:'Liberation Mono',monospace;">&quot;global::vfx.vfx&quot;</div><div class="t" style="left:794.78px;top:779.27px;font-size:12.82px;color:#d4d4d4;font-family:'Liberation Mono',monospace;">,&nbsp;animation:&nbsp;</div><div class="t" style="left:894.75px;top:779.27px;font-size:12.82px;color:#4ec9b0;font-family:'Liberation Mono',monospace;">GlobalVfx</div><div class="t" style="left:963.96px;top:779.27px;font-size:12.82px;color:#d4d4d4;font-family:'Liberation Mono',monospace;">.</div><div class="t" style="left:971.65px;top:779.27px;font-size:12.82px;color:#4ec9b0;font-family:'Liberation Mono',monospace;">SPARKLE_LIGHT</div><div class="t" style="left:1071.62px;top:779.27px;font-size:12.82px;color:#d4d4d4;font-family:'Liberation Mono',monospace;">,&nbsp;x:&nbsp;</div><div class="t" style="left:1110.07px;top:779.27px;font-size:12.82px;color:#b5cea8;font-family:'Liberation Mono',monospace;">110</div><div class="t" style="left:1133.14px;top:779.27px;font-size:12.82px;color:#d4d4d4;font-family:'Liberation Mono',monospace;">,&nbsp;y:&nbsp;-</div><div class="t" style="left:1179.28px;top:779.27px;font-size:12.82px;color:#b5cea8;font-family:'Liberation Mono',monospace;">30</div><div class="t" style="left:1194.66px;top:779.27px;font-size:12.82px;color:#d4d4d4;font-family:'Liberation Mono',monospace;">}),&nbsp;self);</div><div class="t" style="left:284.5px;top:798.29px;font-size:12.8px;color:#858585;font-family:'Liberation Mono',monospace;">3</div><div class="t" style="left:318px;top:798.27px;font-size:12.82px;color:#6a9955;font-family:'Liberation Mono',monospace;">//calls&nbsp;generic&nbsp;whoosh&nbsp;sound</div><div class="t" style="left:284.5px;top:817.29px;font-size:12.8px;color:#858585;font-family:'Liberation Mono',monospace;">4</div><div class="t" style="left:318px;top:817.27px;font-size:12.82px;color:#4ec9b0;font-family:'Liberation Mono',monospace;">AudioClip</div><div class="t" style="left:387.21px;top:817.27px;font-size:12.82px;color:#d4d4d4;font-family:'Liberation Mono',monospace;">.play(</div><div class="t" style="left:433.35px;top:817.27px;font-size:12.82px;color:#4ec9b0;font-family:'Liberation Mono',monospace;">GlobalSfx</div><div class="t" style="left:502.56px;top:817.27px;font-size:12.82px;color:#d4d4d4;font-family:'Liberation Mono',monospace;">.</div><div class="t" style="left:510.25px;top:817.27px;font-size:12.82px;color:#4ec9b0;font-family:'Liberation Mono',monospace;">WHOOSH_2</div><div class="t" style="left:571.77px;top:817.27px;font-size:12.82px;color:#d4d4d4;font-family:'Liberation Mono',monospace;">);</div><svg style="left:1574px;top:756px" width="113" height="10" viewBox="0 0 113 10"><rect x="0" y="1.5" width="24" height="0.9" fill="#6a9955" opacity="0.55"/><rect x="0" y="3.5" width="12" height="0.9" fill="#bbb" opacity="0.55"/><rect x="13" y="3.5" width="3" height="0.9" fill="#569cd6" opacity="0.55"/><rect x="17" y="3.5" width="8" height="0.9" fill="#4ec9b0" opacity="0.55"/><rect x="25" y="3.5" width="13" height="0.9" fill="#bbb" opacity="0.55"/><rect x="38" y="3.5" width="17" height="0.9" fill="#ce9178" opacity="0.55"/><rect x="56" y="3.5" width="11" height="0.9" fill="#bbb" opacity="0.55"/><rect x="68" y="3.5" width="9" height="0.9" fill="#4ec9b0" opacity="0.55"/><rect x="78" y="3.5" width="13" height="0.9" fill="#4ec9b0" opacity="0.55"/><rect x="92" y="3.5" width="20" height="0.9" fill="#bbb" opacity="0.55"/><rect x="0" y="5.5" width="22" height="0.9" fill="#6a9955" opacity="0.55"/><rect x="0" y="7.5" width="9" height="0.9" fill="#4ec9b0" opacity="0.55"/><rect x="10" y="7.5" width="5" height="0.9" fill="#bbb" opacity="0.55"/><rect x="15" y="7.5" width="9" height="0.9" fill="#4ec9b0" opacity="0.55"/><rect x="25" y="7.5" width="8" height="0.9" fill="#4ec9b0" opacity="0.55"/></svg><div class="a" style="left:253px;top:967px;width:1473px;height:1px;background:#262626;"></div></body></html>
